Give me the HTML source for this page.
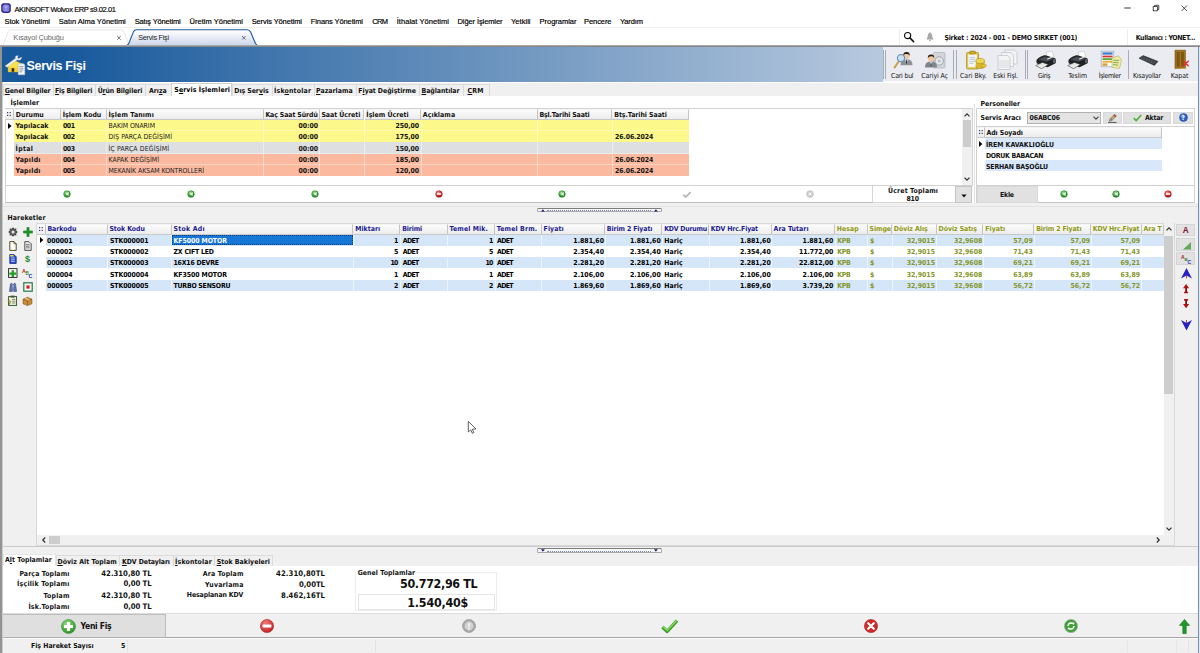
<!DOCTYPE html><html lang="tr"><head><meta charset="utf-8"><title>AKINSOFT Wolvox ERP - Servis Fişi</title><style>

html,body{margin:0;padding:0;}
body{width:1200px;height:653px;position:relative;overflow:hidden;background:#fff;}
.b{position:absolute;box-sizing:border-box;}
.t{position:absolute;white-space:nowrap;font-weight:700;}
.ft{font-family:"DejaVu Sans Condensed","DejaVu Sans","Liberation Sans",sans-serif;}
.fs{font-family:"Liberation Sans","DejaVu Sans",sans-serif;}
svg{position:absolute;overflow:visible;}
u{text-decoration:underline;text-decoration-thickness:0.6px;text-underline-offset:0.8px;}

</style></head><body>
<svg style="left:1px;top:3px" width="10" height="10" viewBox="0 0 10 10"><rect x="0.2" y="0.2" width="9.6" height="9.8" rx="2.4" fill="#2b2684"/><rect x="1.5" y="1.5" width="7" height="7.2" rx="2" fill="#7f7dd6"/><circle cx="5" cy="3.8" r="1.6" fill="#a9a8ea"/><circle cx="5" cy="6.6" r="1.3" fill="#9a98e2"/></svg>
<svg style="left:1120px;top:0" width="80" height="16" viewBox="0 0 80 16"><path d="M4.2 8h6.6" stroke="#222" stroke-width="0.9" fill="none"/><rect x="33.2" y="6.6" width="4.2" height="4.2" fill="none" stroke="#222" stroke-width="0.8"/><path d="M34.6 6.6v-1.3h4.2v4.2h-1.4" fill="none" stroke="#222" stroke-width="0.8"/><path d="M61.5 5.5l5.5 5.5M67 5.5l-5.5 5.5" stroke="#222" stroke-width="0.8" fill="none"/></svg>
<div class="b " style="left:0px;top:27.4px;width:1200px;height:0.8px;background:#efefef;"></div>
<svg style="left:0;top:28px" width="300" height="19" viewBox="0 0 300 19">
<defs><linearGradient id="tg" x1="0" y1="0" x2="0" y2="1"><stop offset="0" stop-color="#ffffff"/><stop offset="0.25" stop-color="#f4f6fb"/><stop offset="1" stop-color="#c9d4e9"/></linearGradient></defs>
<path d="M3 18 L8.2 3.5 Q9 1.8 11 1.8 L120.5 1.8 Q123 1.8 124 4 L129.5 18" fill="#fff" stroke="#e0e0e0" stroke-width="0.8"/>
<path d="M125.5 18 Q128 17.5 129 15 L133.5 3.6 Q134.3 1.7 136.5 1.7 L247 1.7 Q249.6 1.7 250.6 4 L255.5 15.5 Q256.6 17.8 259 18" fill="url(#tg)" stroke="#1f5a9c" stroke-width="1.1"/>
<path d="M117.2 8l3.6 3.6M120.8 8l-3.6 3.6" stroke="#333" stroke-width="0.7" fill="none"/>
<path d="M242 8l3.6 3.6M245.6 8l-3.6 3.6" stroke="#333" stroke-width="0.7" fill="none"/>
</svg>
<div class="b " style="left:899px;top:29px;width:1px;height:16px;background:#ececec;"></div>
<div class="b " style="left:1127px;top:29px;width:1px;height:16px;background:#ececec;"></div>
<svg style="left:903px;top:31px" width="12" height="12" viewBox="0 0 12 12"><circle cx="4.6" cy="4.6" r="3.1" fill="none" stroke="#111" stroke-width="1.2"/><path d="M6.9 6.9L10.6 10.6" stroke="#111" stroke-width="1.5" stroke-linecap="round"/></svg>
<svg style="left:925px;top:32px" width="10" height="10" viewBox="0 0 10 10"><path d="M5 0.3 C6.6 0.8 7.2 2.8 7.4 5 L8.6 7.6 H1.4 L2.6 5 C2.8 2.8 3.4 0.8 5 0.3Z" fill="#a9a9a9"/><rect x="4.2" y="7.8" width="1.6" height="1.2" fill="#a9a9a9"/></svg>
<div class="b " style="left:0px;top:45px;width:1200px;height:1.2px;background:#a8a8a8;"></div>
<div class="b " style="left:0px;top:46px;width:1200px;height:1.3px;background:#868686;"></div>
<div class="b " style="left:0px;top:45.5px;width:1.5px;height:607.5px;background:#939393;"></div>
<div class="b " style="left:1.5px;top:47.3px;width:1px;height:605.7px;background:#d9d9d9;"></div>
<div class="b " style="left:1197.6px;top:47px;width:1px;height:606px;background:#6f8fb3;"></div>
<div class="b " style="left:1198.6px;top:47px;width:1.4px;height:606px;background:#e8e8e8;"></div>
<div class="b " style="left:1.6px;top:47.3px;width:881px;height:34.5px;background:linear-gradient(to right,#18599c 0,#18599c 7%,#b7c9de 100%);"></div>
<svg style="left:4px;top:55px" width="22" height="21" viewBox="0 0 22 21">
<path d="M1.2 11.2L10 5.2 18.6 9.2 14.6 10.4V16.8H4.2V10.8z" fill="#f8e24a" stroke="#d9b620" stroke-width="0.5"/>
<path d="M4.4 12.6h10v4.2h-10z" fill="#f2cf3a"/>
<rect x="7.6" y="13.2" width="2.6" height="3.6" fill="#3a2c0e"/>
<path d="M1.4 10.8L3 12.4 13.6 4.6 12.2 2.8z" fill="#eef1f5" stroke="#aab2bc" stroke-width="0.35"/>
<path d="M11.2 2.2C11.6 0.8 13 0.4 14.4 0.8L13.4 2.6 14.6 3.8 17.6 2C17.8 3.6 16.8 5 15.2 5.2 13.6 5.4 12 4.4 11.2 2.2z" fill="#f4f6f9" stroke="#aab2bc" stroke-width="0.35"/>
<path d="M14.2 8.8h5.4l1.2 1.2V19.8H14.2z" fill="#f6f7f9" stroke="#b4bcc6" stroke-width="0.5"/>
<path d="M15.4 11.4h4M15.4 13.2h4M15.4 15h4M15.4 16.8h2.6" stroke="#6f7883" stroke-width="0.7"/>
</svg>
<div class="b " style="left:882.6px;top:47.3px;width:315px;height:33.6px;background:#eaecf1;"></div>
<div class="b " style="left:882.6px;top:80.9px;width:315px;height:1.1px;background:#f8f8f8;"></div>
<div class="b " style="left:883.2px;top:50px;width:1px;height:29px;background:#a9adb5;"></div>
<div class="b " style="left:885.4px;top:50px;width:1px;height:29px;background:#a9adb5;"></div>
<div class="b " style="left:953.2px;top:50px;width:1px;height:29px;background:#a9adb5;"></div>
<div class="b " style="left:955.6px;top:50px;width:1px;height:29px;background:#a9adb5;"></div>
<div class="b " style="left:1024.6px;top:50px;width:1px;height:29px;background:#a9adb5;"></div>
<div class="b " style="left:1027.0px;top:50px;width:1px;height:29px;background:#a9adb5;"></div>
<div class="b " style="left:1128px;top:50px;width:1px;height:29px;background:#a9adb5;"></div>
<svg style="left:893px;top:50px" width="22" height="20" viewBox="0 0 22 20"><g transform="translate(7.5,1.2) scale(1.0)"><path d="M0 14 C0 9.5 2.5 8 6 8 C9.5 8 12 9.5 12 14Z" fill="#8d9299"/><path d="M4.6 8.2L6 12 7.4 8.2Z" fill="#fff"/><path d="M5.6 8.6h0.8L6.5 12 6 12.6 5.5 12Z" fill="#2b2b2b"/><circle cx="6" cy="4.6" r="3.1" fill="#f1c7a0"/><path d="M2.8 4.4C2.6 1.6 4.4 0.6 6.2 0.8 8.4 0.8 9.6 2.2 9.2 4.6 8.6 3.2 7.4 2.6 5.6 2.8 4.2 2.8 3.4 3.4 2.8 4.4Z" fill="#2a1a10"/></g><path d="M6.2 10.8L1.6 17.4" stroke="#c8a050" stroke-width="2" stroke-linecap="round"/><circle cx="8" cy="8.2" r="3.7" fill="#bfe0f7" fill-opacity="0.85" stroke="#5e86b0" stroke-width="1"/></svg>
<svg style="left:924px;top:51.4px" width="23" height="20" viewBox="0 0 23 20"><rect x="9.5" y="1.5" width="11.5" height="15.5" rx="1" fill="#d4d6da" stroke="#a3a7ad" stroke-width="0.6"/><circle cx="15.2" cy="10" r="4.2" fill="#e6e8ec" stroke="#8f949b" stroke-width="0.8"/><circle cx="15.2" cy="10" r="1.6" fill="#b9bdc4"/><g transform="translate(1,2.6) scale(1.0)"><path d="M0 14 C0 9.5 2.5 8 6 8 C9.5 8 12 9.5 12 14Z" fill="#7e858d"/><path d="M4.6 8.2L6 12 7.4 8.2Z" fill="#fff"/><path d="M5.6 8.6h0.8L6.5 12 6 12.6 5.5 12Z" fill="#2b2b2b"/><circle cx="6" cy="4.6" r="3.1" fill="#f1c7a0"/><path d="M2.8 4.4C2.6 1.6 4.4 0.6 6.2 0.8 8.4 0.8 9.6 2.2 9.2 4.6 8.6 3.2 7.4 2.6 5.6 2.8 4.2 2.8 3.4 3.4 2.8 4.4Z" fill="#2a1a10"/></g></svg>
<svg style="left:964.6px;top:50px" width="22" height="21" viewBox="0 0 22 21"><rect x="1.5" y="2.5" width="12" height="16.5" rx="1.2" fill="#e3c64a" stroke="#a88a1c" stroke-width="0.7"/><rect x="3.2" y="4.6" width="8.6" height="12.6" fill="#f4f7fa"/><rect x="4.6" y="1" width="5.8" height="3" rx="0.8" fill="#c9a82c" stroke="#94781a" stroke-width="0.5"/><path d="M4.4 7.4h6M4.4 9.4h6M4.4 11.4h6M4.4 13.4h4" stroke="#9fb4c8" stroke-width="0.7"/><ellipse cx="15.2" cy="16" rx="4.4" ry="2.6" fill="#d9b62a" stroke="#9c7f12" stroke-width="0.5"/><rect x="10.8" y="11" width="8.8" height="5" fill="#d9b62a"/><ellipse cx="15.2" cy="11" rx="4.4" ry="2.6" fill="#f0d550" stroke="#9c7f12" stroke-width="0.5"/><ellipse cx="19" cy="15.6" rx="2.4" ry="1.6" fill="#e6c73a" stroke="#9c7f12" stroke-width="0.4"/></svg>
<svg style="left:996px;top:49px" width="23" height="22" viewBox="0 0 23 22"><g fill="#f2f3f5" stroke="#b5b8be" stroke-width="0.6"><path d="M9 1h9.5l2.5 2.5V15H9z"/><path d="M5.5 3.5H15l2.5 2.5v11.5H5.5z"/><path d="M2 6.5h9.5L14 9v11.5H2z"/></g><path d="M4 11v8M6 11v8M8 11v8M10 11v8M12 11v8" stroke="#c9ccd1" stroke-width="0.6"/></svg>
<svg style="left:1035px;top:50.4px" width="22" height="21" viewBox="0 0 22 21"><path d="M11.2 2.2L17.2 0.8 19 7.2 12.6 8.8z" fill="#fbfbfb" stroke="#b4b4b4" stroke-width="0.5"/><path d="M1.8 9.6C3 7.6 8 5 10.4 5.2L20 8.2C21.2 8.8 21.4 12.4 20.2 13.6L12.6 17.2 10.4 16.6 2 13.6C1.2 12.6 1.2 10.6 1.8 9.6z" fill="#1f2125"/><path d="M3.2 9.6L10.2 6.4 18.4 8.8 11.6 11.8z" fill="#4b4e55"/><path d="M12.2 9.2L18.2 6.6" stroke="#e9e9e9" stroke-width="1.1"/><ellipse cx="19.4" cy="11" rx="1.5" ry="2.6" fill="#5d6169"/><path d="M0.8 15.6L7.4 12.4 13.4 14.6 6.6 18.6z" fill="#f6f6f6" stroke="#3a3a3a" stroke-width="0.6"/><path d="M3.4 15.6L8 13.6M5.4 16.6L10 14.4" stroke="#b9b9b9" stroke-width="0.5"/></svg>
<svg style="left:1067px;top:50.4px" width="22" height="21" viewBox="0 0 22 21"><path d="M11.2 2.2L17.2 0.8 19 7.2 12.6 8.8z" fill="#fbfbfb" stroke="#b4b4b4" stroke-width="0.5"/><path d="M1.8 9.6C3 7.6 8 5 10.4 5.2L20 8.2C21.2 8.8 21.4 12.4 20.2 13.6L12.6 17.2 10.4 16.6 2 13.6C1.2 12.6 1.2 10.6 1.8 9.6z" fill="#1f2125"/><path d="M3.2 9.6L10.2 6.4 18.4 8.8 11.6 11.8z" fill="#4b4e55"/><path d="M12.2 9.2L18.2 6.6" stroke="#e9e9e9" stroke-width="1.1"/><ellipse cx="19.4" cy="11" rx="1.5" ry="2.6" fill="#5d6169"/><path d="M0.8 15.6L7.4 12.4 13.4 14.6 6.6 18.6z" fill="#f6f6f6" stroke="#3a3a3a" stroke-width="0.6"/><path d="M3.4 15.6L8 13.6M5.4 16.6L10 14.4" stroke="#b9b9b9" stroke-width="0.5"/></svg>
<svg style="left:1100px;top:50.4px" width="23" height="22" viewBox="0 0 23 22"><rect x="1.2" y="1.2" width="12.6" height="15.6" fill="#fdfdfd" stroke="#8fa6c4" stroke-width="0.7"/><rect x="2.4" y="2.4" width="10.2" height="2.2" fill="#3d78c8"/><rect x="2.4" y="5.6" width="10.2" height="1.8" fill="#d23a3a"/><rect x="2.4" y="8.2" width="10.2" height="1.8" fill="#58a846"/><rect x="2.4" y="10.8" width="10.2" height="1.8" fill="#e8b030"/><rect x="2.4" y="13.4" width="5" height="2.4" fill="#e59a2e"/><path d="M12 8l6.5-2.2 3 4-2 8.6-7.5-1z" fill="#f2e9a6" stroke="#a7b65a" stroke-width="0.6"/><path d="M13.4 10.2l5.6.2M13.2 12.4l5.4.4M13 14.6l5 .6" stroke="#6aa84a" stroke-width="0.9"/></svg>
<svg style="left:1138px;top:55px" width="21" height="12" viewBox="0 0 21 12"><path d="M1 3.2L5.2 0.6 20 6.4 16.4 10.4z" fill="#3a3d42" stroke="#1f2124" stroke-width="0.5"/><path d="M3 3.3l13.2 5.4M4.6 2.2l13.4 5.4" stroke="#8b8f96" stroke-width="0.6" stroke-dasharray="1 0.8"/></svg>
<svg style="left:1173px;top:49px" width="17" height="21" viewBox="0 0 17 21"><path d="M2 1.2h10.4v17.6L2 19.6z" fill="#a5761c" stroke="#6e4c0e" stroke-width="0.6"/><path d="M3.6 2.8h3.2v15H3.6zM8 2.8h3v14.6H8z" fill="#7d5812"/><path d="M2 19.6l10.4-.8 1.4 1H3z" fill="#c99a3a"/><path d="M10.6 12.2l4.6 4.6M15.2 12.2l-4.6 4.6" stroke="#e03030" stroke-width="1.6" stroke-linecap="round"/></svg>
<div class="b " style="left:1.6px;top:82px;width:1196px;height:1px;background:#fff;"></div>
<div class="b " style="left:1.6px;top:83px;width:1196px;height:13.3px;background:#f0f0f0;"></div>
<div class="b " style="left:2.5px;top:83.6px;width:487px;height:12.8px;background:#f0f0f0;border:0.8px solid #dcdcdc;border-bottom:none;"></div>
<div class="b " style="left:53px;top:84px;width:0.8px;height:12px;background:#dadada;"></div>
<div class="b " style="left:95px;top:84px;width:0.8px;height:12px;background:#dadada;"></div>
<div class="b " style="left:145px;top:84px;width:0.8px;height:12px;background:#dadada;"></div>
<div class="b " style="left:232px;top:84px;width:0.8px;height:12px;background:#dadada;"></div>
<div class="b " style="left:271.5px;top:84px;width:0.8px;height:12px;background:#dadada;"></div>
<div class="b " style="left:313.5px;top:84px;width:0.8px;height:12px;background:#dadada;"></div>
<div class="b " style="left:355.5px;top:84px;width:0.8px;height:12px;background:#dadada;"></div>
<div class="b " style="left:418.5px;top:84px;width:0.8px;height:12px;background:#dadada;"></div>
<div class="b " style="left:463px;top:84px;width:0.8px;height:12px;background:#dadada;"></div>
<div class="b " style="left:170.5px;top:82.6px;width:61.5px;height:14px;background:#fff;border:0.8px solid #d0d0d0;border-bottom:none;"></div>
<div class="b " style="left:1.6px;top:96.3px;width:1196px;height:107px;background:#fff;"></div>
<div class="b " style="left:4.6px;top:107.8px;width:968.4px;height:78px;background:#fff;border:0.8px solid #d2d2d2;"></div>
<div class="b " style="left:5.4px;top:108.8px;width:8.6px;height:10.900000000000006px;background:linear-gradient(#fbfbfb,#ececec);border-right:0.8px solid #c4c4c4;border-bottom:0.8px solid #c9c9c9;border-top:0.8px solid #f4f4f4;"></div>
<div class="b " style="left:14px;top:108.8px;width:47px;height:10.900000000000006px;background:linear-gradient(#fbfbfb,#ececec);border-right:0.8px solid #c4c4c4;border-bottom:0.8px solid #c9c9c9;border-top:0.8px solid #f4f4f4;"></div>
<div class="b " style="left:61px;top:108.8px;width:45.599999999999994px;height:10.900000000000006px;background:linear-gradient(#fbfbfb,#ececec);border-right:0.8px solid #c4c4c4;border-bottom:0.8px solid #c9c9c9;border-top:0.8px solid #f4f4f4;"></div>
<div class="b " style="left:106.6px;top:108.8px;width:157.00000000000003px;height:10.900000000000006px;background:linear-gradient(#fbfbfb,#ececec);border-right:0.8px solid #c4c4c4;border-bottom:0.8px solid #c9c9c9;border-top:0.8px solid #f4f4f4;"></div>
<div class="b " style="left:263.6px;top:108.8px;width:56.0px;height:10.900000000000006px;background:linear-gradient(#fbfbfb,#ececec);border-right:0.8px solid #c4c4c4;border-bottom:0.8px solid #c9c9c9;border-top:0.8px solid #f4f4f4;"></div>
<div class="b " style="left:319.6px;top:108.8px;width:44.89999999999998px;height:10.900000000000006px;background:linear-gradient(#fbfbfb,#ececec);border-right:0.8px solid #c4c4c4;border-bottom:0.8px solid #c9c9c9;border-top:0.8px solid #f4f4f4;"></div>
<div class="b " style="left:364.5px;top:108.8px;width:56.5px;height:10.900000000000006px;background:linear-gradient(#fbfbfb,#ececec);border-right:0.8px solid #c4c4c4;border-bottom:0.8px solid #c9c9c9;border-top:0.8px solid #f4f4f4;"></div>
<div class="b " style="left:421px;top:108.8px;width:116.60000000000002px;height:10.900000000000006px;background:linear-gradient(#fbfbfb,#ececec);border-right:0.8px solid #c4c4c4;border-bottom:0.8px solid #c9c9c9;border-top:0.8px solid #f4f4f4;"></div>
<div class="b " style="left:537.6px;top:108.8px;width:74.79999999999995px;height:10.900000000000006px;background:linear-gradient(#fbfbfb,#ececec);border-right:0.8px solid #c4c4c4;border-bottom:0.8px solid #c9c9c9;border-top:0.8px solid #f4f4f4;"></div>
<div class="b " style="left:612.4px;top:108.8px;width:76.60000000000002px;height:10.900000000000006px;background:linear-gradient(#fbfbfb,#ececec);border-right:0.8px solid #c4c4c4;border-bottom:0.8px solid #c9c9c9;border-top:0.8px solid #f4f4f4;"></div>
<svg style="left:7.4px;top:112.2px" width="5" height="5" viewBox="0 0 5 5"><rect x="0" y="0" width="1.2" height="1.2" fill="#3a3a6a"/><rect x="0" y="2.8" width="1.2" height="1.2" fill="#3a3a6a"/><rect x="2.6" y="0" width="1.2" height="1.2" fill="#3a3a6a"/><rect x="2.6" y="2.8" width="1.2" height="1.2" fill="#3a3a6a"/></svg>
<div class="b " style="left:14px;top:119.7px;width:675px;height:11.3px;background:#fcf88a;"></div>
<div class="b " style="left:14px;top:130.3px;width:675px;height:0.7px;background:rgba(255,255,255,0.35);"></div>
<div class="b " style="left:14px;top:131.0px;width:675px;height:11.3px;background:#fcf88a;"></div>
<div class="b " style="left:14px;top:141.60000000000002px;width:675px;height:0.7px;background:rgba(255,255,255,0.35);"></div>
<div class="b " style="left:14px;top:142.3px;width:675px;height:11.3px;background:#dddfe0;"></div>
<div class="b " style="left:14px;top:152.90000000000003px;width:675px;height:0.7px;background:rgba(255,255,255,0.35);"></div>
<div class="b " style="left:14px;top:153.60000000000002px;width:675px;height:11.3px;background:#fbba9f;"></div>
<div class="b " style="left:14px;top:164.20000000000005px;width:675px;height:0.7px;background:rgba(255,255,255,0.35);"></div>
<div class="b " style="left:14px;top:164.9px;width:675px;height:11.3px;background:#fbba9f;"></div>
<div class="b " style="left:14px;top:175.50000000000003px;width:675px;height:0.7px;background:rgba(255,255,255,0.35);"></div>
<div class="b " style="left:60.6px;top:119.7px;width:0.8px;height:56.5px;background:rgba(255,255,255,0.45);"></div>
<div class="b " style="left:106.19999999999999px;top:119.7px;width:0.8px;height:56.5px;background:rgba(255,255,255,0.45);"></div>
<div class="b " style="left:263.20000000000005px;top:119.7px;width:0.8px;height:56.5px;background:rgba(255,255,255,0.45);"></div>
<div class="b " style="left:319.20000000000005px;top:119.7px;width:0.8px;height:56.5px;background:rgba(255,255,255,0.45);"></div>
<div class="b " style="left:364.1px;top:119.7px;width:0.8px;height:56.5px;background:rgba(255,255,255,0.45);"></div>
<div class="b " style="left:420.6px;top:119.7px;width:0.8px;height:56.5px;background:rgba(255,255,255,0.45);"></div>
<div class="b " style="left:537.2px;top:119.7px;width:0.8px;height:56.5px;background:rgba(255,255,255,0.45);"></div>
<div class="b " style="left:612.0px;top:119.7px;width:0.8px;height:56.5px;background:rgba(255,255,255,0.45);"></div>
<svg style="left:8.4px;top:122.6px" width="4" height="6" viewBox="0 0 4 6"><path d="M0 0L3.6 3 0 6z" fill="#000"/></svg>
<div class="b " style="left:962.4px;top:108.6px;width:9.6px;height:76.4px;background:#f0f0f0;"></div>
<div class="b " style="left:963px;top:120px;width:8.4px;height:26.6px;background:#cdcdcd;"></div>
<svg style="left:964px;top:112.6px" width="6" height="4" viewBox="0 0 6 4"><path d="M0.5 3.4L3 0.8 5.5 3.4" fill="none" stroke="#333" stroke-width="1.25"/></svg>
<svg style="left:964px;top:177.2px" width="6" height="4" viewBox="0 0 6 4"><path d="M0.5 0.6L3 3.2 5.5 0.6" fill="none" stroke="#333" stroke-width="1.25"/></svg>
<div class="b " style="left:4.6px;top:186px;width:868px;height:17px;background:#fff;border:0.8px solid #d6d6d6;border-top:none;border-bottom:1px solid #bdbdbd;"></div>
<svg width="0" height="0" style="left:0;top:0"><defs><radialGradient id="ng" cx="0.38" cy="0.3" r="0.75"><stop offset="0" stop-color="#9be08a"/><stop offset="0.55" stop-color="#3aa836"/><stop offset="1" stop-color="#1f7d1f"/></radialGradient><radialGradient id="nr" cx="0.38" cy="0.3" r="0.75"><stop offset="0" stop-color="#f79a9a"/><stop offset="0.55" stop-color="#d62a2a"/><stop offset="1" stop-color="#a01212"/></radialGradient></defs></svg>
<svg style="left:62.400000000000006px;top:189px" width="10" height="10" viewBox="0 0 10 10"><circle cx="5" cy="5" r="3.35" fill="url(#ng)" stroke="#2a7d28" stroke-width="0.5"/><path d="M6.6 3.1L3.5 5 6.6 6.9z" fill="#fff"/></svg>
<svg style="left:186.2px;top:189px" width="10" height="10" viewBox="0 0 10 10"><circle cx="5" cy="5" r="3.35" fill="url(#ng)" stroke="#2a7d28" stroke-width="0.5"/><path d="M6.6 3.1L3.5 5 6.6 6.9z" fill="#fff"/></svg>
<svg style="left:309.8px;top:189px" width="10" height="10" viewBox="0 0 10 10"><circle cx="5" cy="5" r="3.35" fill="url(#ng)" stroke="#2a7d28" stroke-width="0.5"/><path d="M6.6 3.1L3.5 5 6.6 6.9z" fill="#fff"/></svg>
<svg style="left:433.6px;top:189px" width="10" height="10" viewBox="0 0 10 10"><circle cx="5" cy="5" r="3.35" fill="url(#nr)" stroke="#9c1616" stroke-width="0.5"/><rect x="2.8" y="4.2" width="4.4" height="1.6" fill="#fff"/></svg>
<svg style="left:557.4px;top:189px" width="10" height="10" viewBox="0 0 10 10"><circle cx="5" cy="5" r="3.35" fill="url(#ng)" stroke="#2a7d28" stroke-width="0.5"/><path d="M6.6 3.1L3.5 5 6.6 6.9z" fill="#fff"/></svg>
<svg style="left:805px;top:189px" width="10" height="10" viewBox="0 0 10 10"><circle cx="5" cy="5" r="3.35" fill="#cfcfcf" stroke="#ababab" stroke-width="0.5"/><path d="M3.6 3.6l2.8 2.8M6.4 3.6L3.6 6.4" stroke="#fff" stroke-width="0.9"/></svg>
<svg style="left:681.5px;top:190.6px" width="10" height="7" viewBox="0 0 10 7"><path d="M1.2 3.8L3.8 6 8.6 1.2" fill="none" stroke="#b9b9b9" stroke-width="1.8"/></svg>
<div class="b " style="left:954.6px;top:186.4px;width:17.6px;height:16.2px;background:#e1e1e1;border:0.8px solid #c6c6c6;"></div>
<svg style="left:960.6px;top:193.6px" width="6" height="4" viewBox="0 0 6 4"><path d="M0.4 0.4h5.2L3 3.4z" fill="#111"/></svg>
<div class="b " style="left:872.6px;top:186px;width:82px;height:17px;border-bottom:1px solid #d8d8d8;"></div>
<div class="b " style="left:975.8px;top:108px;width:219px;height:95px;background:#fff;border:0.8px solid #d2d2d2;"></div>
<div class="b " style="left:974.2px;top:104px;width:0.8px;height:99px;background:#e2e2e2;"></div>
<div class="b " style="left:1027px;top:111.6px;width:74.2px;height:12.2px;background:#e4e4e4;border:0.8px solid #b2b2b2;"></div>
<svg style="left:1093.4px;top:116px" width="6" height="4" viewBox="0 0 6 4"><path d="M0.5 0.6L3 3.2 5.5 0.6" fill="none" stroke="#444" stroke-width="1.1"/></svg>
<div class="b " style="left:1103px;top:111.6px;width:18.6px;height:12.2px;background:#e1e1e1;border:0.8px solid #d9d9d9;"></div>
<svg style="left:1107px;top:112.6px" width="11" height="10" viewBox="0 0 11 10"><path d="M1 9.4h8.6" stroke="#3a3a3a" stroke-width="0.8"/><path d="M2.2 8.2L3 5.8 7.6 1.2 9.4 3 4.8 7.6z" fill="#c7a25a" stroke="#5b5b5b" stroke-width="0.5"/><path d="M7 1.8L8.8 3.6" stroke="#b33" stroke-width="1.2"/><path d="M3.4 5.4L5.2 7.2" stroke="#3a7fd0" stroke-width="1"/></svg>
<div class="b " style="left:1123px;top:111.6px;width:48.2px;height:12.2px;background:#e1e1e1;border:0.8px solid #d9d9d9;"></div>
<svg style="left:1132.6px;top:113.8px" width="9" height="8" viewBox="0 0 9 8"><path d="M0.8 4.2L3.2 6.6 8.2 1" fill="none" stroke="#4db03a" stroke-width="1.7"/></svg>
<div class="b " style="left:1172.8px;top:111.6px;width:20.4px;height:12.2px;background:#e1e1e1;border:0.8px solid #d9d9d9;"></div>
<svg style="left:1178.6px;top:113.2px" width="9" height="9" viewBox="0 0 9 9"><circle cx="4.5" cy="4.5" r="4" fill="#2e63c4" stroke="#1b3f8a" stroke-width="0.5"/><circle cx="3.6" cy="3.2" r="2" fill="#7fa6ea" fill-opacity="0.6"/></svg>
<div class="b " style="left:976.6px;top:126.2px;width:217.6px;height:59.4px;background:#fff;border-top:0.8px solid #d0d0d0;border-bottom:0.8px solid #d0d0d0;"></div>
<div class="b " style="left:977px;top:127px;width:7.600000000000023px;height:10.599999999999994px;background:linear-gradient(#fbfbfb,#ececec);border-right:0.8px solid #c4c4c4;border-bottom:0.8px solid #c9c9c9;border-top:0.8px solid #f4f4f4;"></div>
<div class="b " style="left:984.6px;top:127px;width:176.9999999999999px;height:10.599999999999994px;background:linear-gradient(#fbfbfb,#ececec);border-right:0.8px solid #c4c4c4;border-bottom:0.8px solid #c9c9c9;border-top:0.8px solid #f4f4f4;"></div>
<svg style="left:978.6px;top:130.4px" width="5" height="5" viewBox="0 0 5 5"><rect x="0" y="0" width="1.2" height="1.2" fill="#3a3a6a"/><rect x="0" y="2.8" width="1.2" height="1.2" fill="#3a3a6a"/><rect x="2.6" y="0" width="1.2" height="1.2" fill="#3a3a6a"/><rect x="2.6" y="2.8" width="1.2" height="1.2" fill="#3a3a6a"/></svg>
<div class="b " style="left:984.6px;top:137.6px;width:177px;height:11.3px;background:#d8e7f9;"></div>
<div class="b " style="left:984.6px;top:148.9px;width:177px;height:11.3px;background:#fff;"></div>
<div class="b " style="left:984.6px;top:160.2px;width:177px;height:11.3px;background:#d8e7f9;"></div>
<svg style="left:979px;top:141px" width="4" height="6" viewBox="0 0 4 6"><path d="M0 0L3.4 3 0 6z" fill="#000"/></svg>
<div class="b " style="left:977px;top:186.2px;width:60.6px;height:16.4px;background:#e1e1e1;border:0.8px solid #d9d9d9;"></div>
<div class="b " style="left:1037.6px;top:186.2px;width:156.6px;height:16.6px;border-bottom:1px solid #c4c4c4;"></div>
<svg style="left:1059.3px;top:189px" width="10" height="10" viewBox="0 0 10 10"><circle cx="5" cy="5" r="3.35" fill="url(#ng)" stroke="#2a7d28" stroke-width="0.5"/><path d="M6.6 3.1L3.5 5 6.6 6.9z" fill="#fff"/></svg>
<svg style="left:1111px;top:189px" width="10" height="10" viewBox="0 0 10 10"><circle cx="5" cy="5" r="3.35" fill="url(#ng)" stroke="#2a7d28" stroke-width="0.5"/><path d="M6.6 3.1L3.5 5 6.6 6.9z" fill="#fff"/></svg>
<svg style="left:1162.7px;top:189px" width="10" height="10" viewBox="0 0 10 10"><circle cx="5" cy="5" r="3.35" fill="url(#nr)" stroke="#9c1616" stroke-width="0.5"/><rect x="2.8" y="4.2" width="4.4" height="1.6" fill="#fff"/></svg>
<div class="b " style="left:1.6px;top:203.2px;width:1196px;height:350.6px;background:#f0f0f0;"></div>
<div class="b " style="left:1.6px;top:206px;width:1196px;height:0.8px;background:#e2e2e2;"></div>
<div class="b " style="left:536.8px;top:207.6px;width:124.8px;height:4.8px;background:#f7f7f7;border:0.8px solid #a9a9a9;border-top-color:#7e7e7e;border-radius:1.4px;"></div>
<div class="b " style="left:547px;top:210.2px;width:104px;height:0px;border-top:0.9px dotted #7b86b0;"></div>
<svg style="left:540.8px;top:208.79999999999998px" width="4" height="3" viewBox="0 0 4 3"><path d="M0 2.6h3.8L1.9 0.2z" fill="#15156e"/></svg>
<svg style="left:654.2px;top:208.79999999999998px" width="4" height="3" viewBox="0 0 4 3"><path d="M0 2.6h3.8L1.9 0.2z" fill="#15156e"/></svg>
<div class="b " style="left:36.4px;top:222.6px;width:1138.4px;height:323.4px;background:#fff;border:0.8px solid #d9d9d9;"></div>
<div class="b " style="left:37.2px;top:223.6px;width:8.399999999999999px;height:11.0px;background:linear-gradient(#fbfbfb,#ececec);border-right:0.8px solid #c4c4c4;border-bottom:0.8px solid #c9c9c9;border-top:0.8px solid #f4f4f4;"></div>
<div class="b " style="left:45.6px;top:223.6px;width:61.99999999999999px;height:11.0px;background:linear-gradient(#fbfbfb,#ececec);border-right:0.8px solid #c4c4c4;border-bottom:0.8px solid #c9c9c9;border-top:0.8px solid #f4f4f4;"></div>
<div class="b " style="left:107.6px;top:223.6px;width:64.20000000000002px;height:11.0px;background:linear-gradient(#fbfbfb,#ececec);border-right:0.8px solid #c4c4c4;border-bottom:0.8px solid #c9c9c9;border-top:0.8px solid #f4f4f4;"></div>
<div class="b " style="left:171.8px;top:223.6px;width:181.59999999999997px;height:11.0px;background:linear-gradient(#fbfbfb,#ececec);border-right:0.8px solid #c4c4c4;border-bottom:0.8px solid #c9c9c9;border-top:0.8px solid #f4f4f4;"></div>
<div class="b " style="left:353.4px;top:223.6px;width:47.0px;height:11.0px;background:linear-gradient(#fbfbfb,#ececec);border-right:0.8px solid #c4c4c4;border-bottom:0.8px solid #c9c9c9;border-top:0.8px solid #f4f4f4;"></div>
<div class="b " style="left:400.4px;top:223.6px;width:47.400000000000034px;height:11.0px;background:linear-gradient(#fbfbfb,#ececec);border-right:0.8px solid #c4c4c4;border-bottom:0.8px solid #c9c9c9;border-top:0.8px solid #f4f4f4;"></div>
<div class="b " style="left:447.8px;top:223.6px;width:47.19999999999999px;height:11.0px;background:linear-gradient(#fbfbfb,#ececec);border-right:0.8px solid #c4c4c4;border-bottom:0.8px solid #c9c9c9;border-top:0.8px solid #f4f4f4;"></div>
<div class="b " style="left:495px;top:223.6px;width:46.799999999999955px;height:11.0px;background:linear-gradient(#fbfbfb,#ececec);border-right:0.8px solid #c4c4c4;border-bottom:0.8px solid #c9c9c9;border-top:0.8px solid #f4f4f4;"></div>
<div class="b " style="left:541.8px;top:223.6px;width:63.200000000000045px;height:11.0px;background:linear-gradient(#fbfbfb,#ececec);border-right:0.8px solid #c4c4c4;border-bottom:0.8px solid #c9c9c9;border-top:0.8px solid #f4f4f4;"></div>
<div class="b " style="left:605px;top:223.6px;width:57.39999999999998px;height:11.0px;background:linear-gradient(#fbfbfb,#ececec);border-right:0.8px solid #c4c4c4;border-bottom:0.8px solid #c9c9c9;border-top:0.8px solid #f4f4f4;"></div>
<div class="b " style="left:662.4px;top:223.6px;width:46.60000000000002px;height:11.0px;background:linear-gradient(#fbfbfb,#ececec);border-right:0.8px solid #c4c4c4;border-bottom:0.8px solid #c9c9c9;border-top:0.8px solid #f4f4f4;"></div>
<div class="b " style="left:709px;top:223.6px;width:62.799999999999955px;height:11.0px;background:linear-gradient(#fbfbfb,#ececec);border-right:0.8px solid #c4c4c4;border-bottom:0.8px solid #c9c9c9;border-top:0.8px solid #f4f4f4;"></div>
<div class="b " style="left:771.8px;top:223.6px;width:63.200000000000045px;height:11.0px;background:linear-gradient(#fbfbfb,#ececec);border-right:0.8px solid #c4c4c4;border-bottom:0.8px solid #c9c9c9;border-top:0.8px solid #f4f4f4;"></div>
<div class="b " style="left:835px;top:223.6px;width:32.799999999999955px;height:11.0px;background:linear-gradient(#fbfbfb,#ececec);border-right:0.8px solid #c4c4c4;border-bottom:0.8px solid #c9c9c9;border-top:0.8px solid #f4f4f4;"></div>
<div class="b " style="left:867.8px;top:223.6px;width:24.200000000000045px;height:11.0px;background:linear-gradient(#fbfbfb,#ececec);border-right:0.8px solid #c4c4c4;border-bottom:0.8px solid #c9c9c9;border-top:0.8px solid #f4f4f4;"></div>
<div class="b " style="left:892px;top:223.6px;width:44.799999999999955px;height:11.0px;background:linear-gradient(#fbfbfb,#ececec);border-right:0.8px solid #c4c4c4;border-bottom:0.8px solid #c9c9c9;border-top:0.8px solid #f4f4f4;"></div>
<div class="b " style="left:936.8px;top:223.6px;width:46.60000000000002px;height:11.0px;background:linear-gradient(#fbfbfb,#ececec);border-right:0.8px solid #c4c4c4;border-bottom:0.8px solid #c9c9c9;border-top:0.8px solid #f4f4f4;"></div>
<div class="b " style="left:983.4px;top:223.6px;width:51.000000000000114px;height:11.0px;background:linear-gradient(#fbfbfb,#ececec);border-right:0.8px solid #c4c4c4;border-bottom:0.8px solid #c9c9c9;border-top:0.8px solid #f4f4f4;"></div>
<div class="b " style="left:1034.4px;top:223.6px;width:56.59999999999991px;height:11.0px;background:linear-gradient(#fbfbfb,#ececec);border-right:0.8px solid #c4c4c4;border-bottom:0.8px solid #c9c9c9;border-top:0.8px solid #f4f4f4;"></div>
<div class="b " style="left:1091px;top:223.6px;width:50.59999999999991px;height:11.0px;background:linear-gradient(#fbfbfb,#ececec);border-right:0.8px solid #c4c4c4;border-bottom:0.8px solid #c9c9c9;border-top:0.8px solid #f4f4f4;"></div>
<div class="b " style="left:1141.6px;top:223.6px;width:22.40000000000009px;height:11.0px;background:linear-gradient(#fbfbfb,#ececec);border-right:0.8px solid #c4c4c4;border-bottom:0.8px solid #c9c9c9;border-top:0.8px solid #f4f4f4;"></div>
<svg style="left:39.2px;top:226.6px" width="5" height="5" viewBox="0 0 5 5"><rect x="0" y="0" width="1.2" height="1.2" fill="#3a3a6a"/><rect x="0" y="2.8" width="1.2" height="1.2" fill="#3a3a6a"/><rect x="2.6" y="0" width="1.2" height="1.2" fill="#3a3a6a"/><rect x="2.6" y="2.8" width="1.2" height="1.2" fill="#3a3a6a"/></svg>
<div class="b " style="left:45.6px;top:234.6px;width:1118.4px;height:11.3px;background:#d6e6f9;"></div>
<div class="b " style="left:171.8px;top:234.79999999999998px;width:181.6px;height:10.100000000000001px;background:#1676d6;border:0.8px dotted #0d3f7a;"></div>
<div class="b " style="left:45.6px;top:257.2px;width:1118.4px;height:11.3px;background:#d6e6f9;"></div>
<div class="b " style="left:45.6px;top:279.8px;width:1118.4px;height:11.3px;background:#d6e6f9;"></div>
<div class="b " style="left:107.19999999999999px;top:234.6px;width:0.8px;height:56.5px;background:rgba(255,255,255,0.55);"></div>
<div class="b " style="left:171.4px;top:234.6px;width:0.8px;height:56.5px;background:rgba(255,255,255,0.55);"></div>
<div class="b " style="left:353.0px;top:234.6px;width:0.8px;height:56.5px;background:rgba(255,255,255,0.55);"></div>
<div class="b " style="left:400.0px;top:234.6px;width:0.8px;height:56.5px;background:rgba(255,255,255,0.55);"></div>
<div class="b " style="left:447.40000000000003px;top:234.6px;width:0.8px;height:56.5px;background:rgba(255,255,255,0.55);"></div>
<div class="b " style="left:494.6px;top:234.6px;width:0.8px;height:56.5px;background:rgba(255,255,255,0.55);"></div>
<div class="b " style="left:541.4px;top:234.6px;width:0.8px;height:56.5px;background:rgba(255,255,255,0.55);"></div>
<div class="b " style="left:604.6px;top:234.6px;width:0.8px;height:56.5px;background:rgba(255,255,255,0.55);"></div>
<div class="b " style="left:662.0px;top:234.6px;width:0.8px;height:56.5px;background:rgba(255,255,255,0.55);"></div>
<div class="b " style="left:708.6px;top:234.6px;width:0.8px;height:56.5px;background:rgba(255,255,255,0.55);"></div>
<div class="b " style="left:771.4px;top:234.6px;width:0.8px;height:56.5px;background:rgba(255,255,255,0.55);"></div>
<div class="b " style="left:834.6px;top:234.6px;width:0.8px;height:56.5px;background:rgba(255,255,255,0.55);"></div>
<div class="b " style="left:867.4px;top:234.6px;width:0.8px;height:56.5px;background:rgba(255,255,255,0.55);"></div>
<div class="b " style="left:891.6px;top:234.6px;width:0.8px;height:56.5px;background:rgba(255,255,255,0.55);"></div>
<div class="b " style="left:936.4px;top:234.6px;width:0.8px;height:56.5px;background:rgba(255,255,255,0.55);"></div>
<div class="b " style="left:983.0px;top:234.6px;width:0.8px;height:56.5px;background:rgba(255,255,255,0.55);"></div>
<div class="b " style="left:1034.0px;top:234.6px;width:0.8px;height:56.5px;background:rgba(255,255,255,0.55);"></div>
<div class="b " style="left:1090.6px;top:234.6px;width:0.8px;height:56.5px;background:rgba(255,255,255,0.55);"></div>
<div class="b " style="left:1141.1999999999998px;top:234.6px;width:0.8px;height:56.5px;background:rgba(255,255,255,0.55);"></div>
<svg style="left:40px;top:237.4px" width="4" height="6" viewBox="0 0 4 6"><path d="M0 0L3.4 3 0 6z" fill="#000"/></svg>
<div class="b " style="left:1164px;top:223.4px;width:10.2px;height:322px;background:#f0f0f0;"></div>
<div class="b " style="left:1164.4px;top:236px;width:8.6px;height:158.4px;background:#cdcdcd;"></div>
<svg style="left:1165.6px;top:227.4px" width="6" height="4" viewBox="0 0 6 4"><path d="M0.5 3.4L3 0.8 5.5 3.4" fill="none" stroke="#333" stroke-width="1.25"/></svg>
<svg style="left:1165.6px;top:527.2px" width="6" height="4" viewBox="0 0 6 4"><path d="M0.5 0.6L3 3.2 5.5 0.6" fill="none" stroke="#333" stroke-width="1.25"/></svg>
<div class="b " style="left:37.2px;top:534.6px;width:1137px;height:10.7px;background:#f0f0f0;"></div>
<div class="b " style="left:1.6px;top:545.6px;width:1196px;height:0.9px;background:#cbcbcb;"></div>
<div class="b " style="left:49px;top:535.8px;width:10.6px;height:8px;background:#cdcdcd;"></div>
<svg style="left:41.6px;top:536.6px" width="4" height="6" viewBox="0 0 4 6"><path d="M3.2 0.5L0.8 3 3.2 5.5" fill="none" stroke="#333" stroke-width="1.25"/></svg>
<svg style="left:1156px;top:536.6px" width="4" height="6" viewBox="0 0 4 6"><path d="M0.8 0.5L3.2 3 0.8 5.5" fill="none" stroke="#333" stroke-width="1.25"/></svg>
<div class="b " style="left:1176.4px;top:223.6px;width:18.8px;height:12.6px;background:#e1e1e1;border:0.8px solid #d4d4d4;"></div>
<div class="b " style="left:1176.4px;top:238.4px;width:18.8px;height:12.6px;background:#e1e1e1;border:0.8px solid #d4d4d4;"></div>
<div class="b " style="left:1176.4px;top:252.4px;width:18.8px;height:12.6px;background:#e1e1e1;border:0.8px solid #d4d4d4;"></div>
<svg style="left:1182.6px;top:241.8px" width="8" height="7.4" viewBox="0 0 8 7.4"><path d="M0 7.4H8V0z" fill="#62aa5c"/></svg>
<svg style="left:1180.6px;top:253.6px" width="11" height="10" viewBox="0 0 11 10"><text x="0" y="4.6" font-family="Liberation Sans" font-weight="700" font-size="5" fill="#b02020">A</text><text x="3.6" y="7.4" font-family="Liberation Sans" font-weight="700" font-size="4.4" fill="#2a8a2a">B</text><text x="6.6" y="9.6" font-family="Liberation Sans" font-weight="700" font-size="5" fill="#2a2ab0">C</text></svg>
<svg style="left:1180.6px;top:268.4px" width="11" height="10.4" viewBox="0 0 11 10.4"><path d="M5.5 0L11 10.4 5.5 7.4 0 10.4z" fill="#2522c4"/><path d="M5.5 7.4v3" stroke="#a01818" stroke-width="0.8"/></svg>
<svg style="left:1182.5px;top:284.2px" width="6.2" height="9.3" viewBox="0 0 6.8 10.2"><path d="M3.4 0L6.8 4.6H4.4V8.4H5.6V10.2H1.2V8.4H2.4V4.6H0z" fill="#b01414"/><path d="M3.4 4.6v5" stroke="#4a0a0a" stroke-width="0.6"/></svg>
<svg style="left:1182.5px;top:298.8px" width="6.2" height="9.3" viewBox="0 0 6.8 10.2"><path d="M3.4 10.2L6.8 5.6H4.4V1.8H5.6V0H1.2V1.8H2.4V5.6H0z" fill="#b01414"/><path d="M3.4 0.6v5" stroke="#4a0a0a" stroke-width="0.6"/></svg>
<svg style="left:1180.6px;top:319.6px" width="11" height="10.4" viewBox="0 0 11 10.4"><path d="M5.5 10.4L11 0 5.5 3 0 0z" fill="#2522c4"/><path d="M5.5 3v-3" stroke="#a01818" stroke-width="0.8"/></svg>
<svg style="left:7.5px;top:226.7px" width="10" height="10" viewBox="0 0 10 10"><polygon points="9.80,5.00 8.23,6.34 8.39,8.39 6.34,8.23 5.00,9.80 3.66,8.23 1.61,8.39 1.77,6.34 0.20,5.00 1.77,3.66 1.61,1.61 3.66,1.77 5.00,0.20 6.34,1.77 8.39,1.61 8.23,3.66" fill="#3c3c3c"/><circle cx="5" cy="5" r="3.2" fill="#5a5a5a"/><circle cx="5" cy="5" r="1.5" fill="#e9e9e9"/></svg>
<svg style="left:22.5px;top:226.7px" width="10" height="10" viewBox="0 0 10 10"><path d="M3.9 0.5h2.2v3.4h3.4v2.2H6.1v3.4H3.9V6.1H0.5V3.9h3.4z" fill="#1f9a24" stroke="#0f6a14" stroke-width="0.5"/></svg>
<svg style="left:8.5px;top:240.5px" width="8" height="10" viewBox="0 0 8 10"><path d="M0.8 0.6h4.2l2.2 2.2v6.6H0.8z" fill="#fffef0" stroke="#3a3a1a" stroke-width="0.9"/><path d="M5 0.6v2.2h2.2" fill="none" stroke="#3a3a1a" stroke-width="0.7"/></svg>
<svg style="left:23.5px;top:240.5px" width="8" height="10" viewBox="0 0 8 10"><path d="M0.8 0.6h4.2l2.2 2.2v6.6H0.8z" fill="#e6e6e6" stroke="#444" stroke-width="0.9"/><path d="M2 3.6h3.6M2 5.2h3.6M2 6.8h3.6" stroke="#555" stroke-width="0.7"/></svg>
<svg style="left:8.5px;top:254.3px" width="8" height="10" viewBox="0 0 8 10"><path d="M0.8 0.6h4.2l2.2 2.2v6.6H0.8z" fill="#2a4fd0" stroke="#16267a" stroke-width="0.8"/><path d="M2 4h3.8M2 5.8h3.8M2 7.4h3.8" stroke="#dfe6ff" stroke-width="0.7"/><path d="M1.2 1h3.4v1.6H1.2z" fill="#e8d84a"/></svg>
<span class="t fs" style="left:24.9px;top:253.70000000000002px;font-size:9px;line-height:11px;color:#1f8a2c;font-weight:700;">$</span>
<svg style="left:7.5px;top:268.1px" width="10" height="10" viewBox="0 0 10 10"><rect x="0.6" y="0.6" width="8.4" height="8.8" fill="#f4f4f4" stroke="#222" stroke-width="0.9"/><path d="M3.6 2.2h2.4v2.2h2.2v2.4H6v2.2H3.6V6.8H1.4V4.4h2.2z" fill="#22a022"/></svg>
<svg style="left:22.0px;top:268.1px" width="11" height="10" viewBox="0 0 11 10"><text x="0" y="4.6" font-family="Liberation Sans" font-weight="700" font-size="5.2" fill="#b02020">A</text><text x="3.6" y="7.4" font-family="Liberation Sans" font-weight="700" font-size="4.6" fill="#2a8a2a">B</text><text x="6.6" y="9.6" font-family="Liberation Sans" font-weight="700" font-size="5.2" fill="#2a2ab0">C</text></svg>
<svg style="left:7.5px;top:281.9px" width="10" height="10" viewBox="0 0 10 10"><path d="M1.4 9.4L2.4 2.2C2.6 1 4.2 1 4.4 2.2V9.4z" fill="#5f78b8" stroke="#2a3a6a" stroke-width="0.5"/><path d="M5.6 9.4V2.2C5.8 1 7.4 1 7.6 2.2L8.6 9.4z" fill="#5f78b8" stroke="#2a3a6a" stroke-width="0.5"/><rect x="4.2" y="3" width="1.6" height="2.4" fill="#98a7cf"/></svg>
<svg style="left:22.5px;top:281.9px" width="10" height="10" viewBox="0 0 10 10"><rect x="0.8" y="0.8" width="8.4" height="8.4" fill="#f7f7f7" stroke="#1e7a4a" stroke-width="1.2"/><rect x="3.4" y="3.4" width="3.2" height="3.2" fill="#d02020"/></svg>
<svg style="left:7.0px;top:295.2px" width="11" height="11" viewBox="0 0 11 11"><rect x="1.6" y="1.6" width="8" height="8.8" fill="#f2f0d8" stroke="#2a4a2a" stroke-width="0.9"/><rect x="3.6" y="0.6" width="4" height="2" fill="#3a5a3a"/><path d="M1 5l3 1.4-1.6 3z" fill="#d8c23a" stroke="#2a4a2a" stroke-width="0.4"/><path d="M5 4.4h3.4M5 6.2h3.4M5 8h3.4" stroke="#4a6a4a" stroke-width="0.7"/></svg>
<svg style="left:22.0px;top:295.7px" width="11" height="10" viewBox="0 0 11 10"><path d="M1 3.2L5.5 1.2 10 3.2V7.8L5.5 9.6 1 7.8z" fill="#c98a3a" stroke="#7a4a12" stroke-width="0.5"/><path d="M1 3.2L5.5 5 10 3.2M5.5 5V9.6" fill="none" stroke="#7a4a12" stroke-width="0.5"/><path d="M3 2.2L7.6 4.2" stroke="#f0d8a0" stroke-width="0.9"/></svg>
<div class="b " style="left:536.8px;top:548.2px;width:124.8px;height:4.8px;background:#f7f7f7;border:0.8px solid #a9a9a9;border-top-color:#7e7e7e;border-radius:1.4px;"></div>
<div class="b " style="left:547px;top:550.8000000000001px;width:104px;height:0px;border-top:0.9px dotted #7b86b0;"></div>
<svg style="left:540.8px;top:549.4000000000001px" width="4" height="3" viewBox="0 0 4 3"><path d="M0 0.3h3.8L1.9 2.7z" fill="#15156e"/></svg>
<svg style="left:654.2px;top:549.4000000000001px" width="4" height="3" viewBox="0 0 4 3"><path d="M0 0.3h3.8L1.9 2.7z" fill="#15156e"/></svg>
<div class="b " style="left:1.6px;top:553.8px;width:1196px;height:12.4px;background:#f0f0f0;"></div>
<div class="b " style="left:2.6px;top:553.6px;width:53.2px;height:13px;background:#fff;border:0.8px solid #e6e6e6;border-bottom:none;"></div>
<div class="b " style="left:55.8px;top:554.8px;width:217.4px;height:11.4px;background:#f0f0f0;border:0.8px solid #dcdcdc;border-bottom:none;"></div>
<div class="b " style="left:119.4px;top:555.4px;width:0.8px;height:10.6px;background:#dadada;"></div>
<div class="b " style="left:172.6px;top:555.4px;width:0.8px;height:10.6px;background:#dadada;"></div>
<div class="b " style="left:214px;top:555.4px;width:0.8px;height:10.6px;background:#dadada;"></div>
<div class="b " style="left:1.6px;top:566.4px;width:1196px;height:46.8px;background:#fff;"></div>
<div class="b " style="left:1.6px;top:613px;width:1196px;height:0.8px;background:#dcdcdc;"></div>
<div class="b " style="left:355px;top:572.4px;width:141.6px;height:38.4px;border:0.8px solid #ececec;"></div>
<div class="b " style="left:356.4px;top:568px;width:59.6px;height:8.6px;background:#fff;"></div>
<div class="b " style="left:358.4px;top:594px;width:136.6px;height:15.6px;border:0.8px solid #e4e4e4;"></div>
<div class="b " style="left:1.6px;top:613.8px;width:1196px;height:24px;background:#f0f0f0;"></div>
<div class="b " style="left:2.2px;top:614.2px;width:163.6px;height:23.8px;background:#dfdfdf;border:0.8px solid #bdbdbd;border-bottom-color:#b0b0b0;"></div>
<svg style="left:60.7px;top:618.5px" width="15" height="15" viewBox="0 0 15 15"><defs><radialGradient id="gp" cx="0.4" cy="0.3" r="0.8"><stop offset="0" stop-color="#8fe07a"/><stop offset="1" stop-color="#1f8a1f"/></radialGradient></defs><circle cx="7.5" cy="7.5" r="7" fill="url(#gp)" stroke="#2a7a2a" stroke-width="0.5"/><path d="M6 3h3v3h3v3H9v3H6V9H3V6h3z" fill="#fff"/></svg>
<svg style="left:259.8px;top:619.0px" width="14" height="14" viewBox="0 0 14 14"><defs><radialGradient id="rp" cx="0.4" cy="0.3" r="0.8"><stop offset="0" stop-color="#f07a7a"/><stop offset="1" stop-color="#c01818"/></radialGradient></defs><circle cx="7" cy="7" r="6.6" fill="url(#rp)" stroke="#9a1414" stroke-width="0.5"/><rect x="2.6" y="5.6" width="8.8" height="2.8" rx="0.6" fill="#fff"/></svg>
<svg style="left:461.8px;top:619.0px" width="14" height="14" viewBox="0 0 14 14"><circle cx="7" cy="7" r="6.5" fill="#a9a9a9" stroke="#8e8e8e" stroke-width="0.6"/><circle cx="7" cy="7" r="4.4" fill="#d2d2d2"/><path d="M6 4.2h2.2l-.6 4.4H6.4zM6.2 9.4h1.6v1.4H6.2z" fill="#f4f4f4"/></svg>
<svg style="left:660.7px;top:619.0px" width="17" height="14" viewBox="0 0 17 14"><path d="M1.4 8L6.2 12.4 16 1.6" fill="none" stroke="#3f9a2a" stroke-width="3.4" stroke-linejoin="round"/><path d="M1.8 7.6L6.2 11.4 15.4 1.6" fill="none" stroke="#7fd65a" stroke-width="1.6"/></svg>
<svg style="left:863.6px;top:619.0px" width="14" height="14" viewBox="0 0 14 14"><circle cx="7" cy="7" r="6.6" fill="#d42828" stroke="#9a1414" stroke-width="0.5"/><path d="M4.2 4.2l5.6 5.6M9.8 4.2l-5.6 5.6" stroke="#fff" stroke-width="2.2" stroke-linecap="round"/></svg>
<svg style="left:1064.4px;top:619.0px" width="14" height="14" viewBox="0 0 14 14"><circle cx="7" cy="7" r="6.6" fill="#3f9f3a" stroke="#9ab69a" stroke-width="0.9"/><path d="M4 7a3 3 0 0 1 5-2.2" fill="none" stroke="#fff" stroke-width="1.5"/><path d="M10 7a3 3 0 0 1-5 2.2" fill="none" stroke="#fff" stroke-width="1.5"/><path d="M8 3.4l2.6 0.4-1 2.2z M6 10.6l-2.6-0.4 1-2.2z" fill="#fff"/></svg>
<svg style="left:1178.7px;top:618.5px" width="11" height="15" viewBox="0 0 11 15"><path d="M5.5 0.4L10.6 6.4H7.2V14.6H3.8V6.4H0.4z" fill="#1f9a2a" stroke="#0e6a16" stroke-width="0.6"/></svg>
<div class="b " style="left:165.8px;top:636.8px;width:1032px;height:1.2px;background:#a4a4a4;"></div>
<div class="b " style="left:1.6px;top:638px;width:1196px;height:0.9px;background:#fbfbfb;"></div>
<div class="b " style="left:1.6px;top:638.8px;width:1196px;height:14.2px;background:#f0f0f0;"></div>
<div class="b " style="left:1127px;top:640px;width:0.8px;height:12px;background:#e6e6e6;"></div>
<div class="b " style="left:1175.6px;top:640px;width:0.8px;height:12px;background:#e6e6e6;"></div>
<div class="b " style="left:1187.6px;top:640px;width:0.8px;height:12px;background:#e6e6e6;"></div>
<svg style="left:466px;top:419px" width="12" height="16" viewBox="466 419 12 16"><path d="M468.3 421.4L468.3 431.9L470.7 429.9L472.4 433.3L473.9 432.5L472.3 429.3L475.9 428.8Z" fill="#fff" stroke="#2a2a2a" stroke-width="0.75" stroke-linejoin="round"/></svg>
<div class="b " style="left:1.5px;top:82px;width:0.8px;height:571px;background:#cdcdcd;"></div>
<div class="b " style="left:127.4px;top:640.4px;width:0.8px;height:11.4px;background:#e2e2e2;"></div>
<div class="b " style="left:375.4px;top:640.4px;width:0.8px;height:11.4px;background:#e2e2e2;"></div>
<span id="t0" class="t fs" style="left:14.50px;top:4px;font-size:7.5px;line-height:11px;color:#000;font-weight:400;letter-spacing:-0.394px;-webkit-text-stroke:0.15px #000;">AKINSOFT Wolvox ERP s9.02.01</span>
<span id="t1" class="t fs" style="left:4.50px;top:16px;font-size:7.5px;line-height:11px;color:#000;font-weight:400;letter-spacing:-0.053px;-webkit-text-stroke:0.18px #000;">Stok Yönetimi</span>
<span id="t2" class="t fs" style="left:58.80px;top:16px;font-size:7.5px;line-height:11px;color:#000;font-weight:400;letter-spacing:-0.023px;-webkit-text-stroke:0.18px #000;">Satın Alma Yönetimi</span>
<span id="t3" class="t fs" style="left:134.70px;top:16px;font-size:7.5px;line-height:11px;color:#000;font-weight:400;letter-spacing:-0.164px;-webkit-text-stroke:0.18px #000;">Satış Yönetimi</span>
<span id="t4" class="t fs" style="left:189.50px;top:16px;font-size:7.5px;line-height:11px;color:#000;font-weight:400;letter-spacing:0.020px;-webkit-text-stroke:0.18px #000;">Üretim Yönetimi</span>
<span id="t5" class="t fs" style="left:251.70px;top:16px;font-size:7.5px;line-height:11px;color:#000;font-weight:400;letter-spacing:-0.119px;-webkit-text-stroke:0.18px #000;">Servis Yönetimi</span>
<span id="t6" class="t fs" style="left:310.80px;top:16px;font-size:7.5px;line-height:11px;color:#000;font-weight:400;letter-spacing:-0.103px;-webkit-text-stroke:0.18px #000;">Finans Yönetimi</span>
<span id="t7" class="t fs" style="left:372.20px;top:16px;font-size:7.5px;line-height:11px;color:#000;font-weight:400;letter-spacing:-0.647px;-webkit-text-stroke:0.18px #000;">CRM</span>
<span id="t8" class="t fs" style="left:396.70px;top:16px;font-size:7.5px;line-height:11px;color:#000;font-weight:400;letter-spacing:0.049px;-webkit-text-stroke:0.18px #000;">İthalat Yönetimi</span>
<span id="t9" class="t fs" style="left:457.50px;top:16px;font-size:7.5px;line-height:11px;color:#000;font-weight:400;letter-spacing:-0.097px;-webkit-text-stroke:0.18px #000;">Diğer İşlemler</span>
<span id="t10" class="t fs" style="left:511.00px;top:16px;font-size:7.5px;line-height:11px;color:#000;font-weight:400;letter-spacing:0.029px;-webkit-text-stroke:0.18px #000;">Yetkili</span>
<span id="t11" class="t fs" style="left:539.50px;top:16px;font-size:7.5px;line-height:11px;color:#000;font-weight:400;letter-spacing:-0.010px;-webkit-text-stroke:0.18px #000;">Programlar</span>
<span id="t12" class="t fs" style="left:584.00px;top:16px;font-size:7.5px;line-height:11px;color:#000;font-weight:400;letter-spacing:-0.073px;-webkit-text-stroke:0.18px #000;">Pencere</span>
<span id="t13" class="t fs" style="left:620.00px;top:16px;font-size:7.5px;line-height:11px;color:#000;font-weight:400;letter-spacing:-0.125px;-webkit-text-stroke:0.18px #000;">Yardım</span>
<span id="t14" class="t fs" style="left:13.30px;top:32px;font-size:7.5px;line-height:11px;color:#6a6a6a;font-weight:400;letter-spacing:-0.173px;">Kısayol Çubuğu</span>
<span id="t15" class="t fs" style="left:138.30px;top:33px;font-size:7.2px;line-height:10px;color:#222;font-weight:400;letter-spacing:-0.246px;">Servis Fişi</span>
<span id="t16" class="t ft" style="left:944.40px;top:33px;font-size:6.9px;line-height:10px;color:#111;letter-spacing:-0.186px;">Şirket : 2024 - 001 - DEMO SIRKET (001)</span>
<span id="t17" class="t ft" style="left:1135.70px;top:33px;font-size:6.9px;line-height:10px;color:#111;letter-spacing:-0.329px;">Kullanıcı : YONET...</span>
<span id="t18" class="t fs" style="left:26.50px;top:58px;font-size:12.5px;line-height:17px;color:#fff;letter-spacing:-0.305px;">Servis Fişi</span>
<span id="t19" class="t ft" style="left:891.00px;top:71px;font-size:6.9px;line-height:10px;color:#111;font-weight:400;letter-spacing:-0.196px;">Cari bul</span>
<span id="t20" class="t ft" style="left:921.30px;top:71px;font-size:6.9px;line-height:10px;color:#111;font-weight:400;letter-spacing:-0.075px;">Cariyi Aç</span>
<span id="t21" class="t ft" style="left:960.00px;top:71px;font-size:6.9px;line-height:10px;color:#111;font-weight:400;letter-spacing:0.009px;">Cari Bky.</span>
<span id="t22" class="t ft" style="left:993.30px;top:71px;font-size:6.9px;line-height:10px;color:#111;font-weight:400;letter-spacing:-0.160px;">Eski Fişl.</span>
<span id="t23" class="t ft" style="left:1038.00px;top:71px;font-size:6.9px;line-height:10px;color:#111;font-weight:400;letter-spacing:-0.383px;">Giriş</span>
<span id="t24" class="t ft" style="left:1068.30px;top:71px;font-size:6.9px;line-height:10px;color:#111;font-weight:400;letter-spacing:-0.091px;">Teslim</span>
<span id="t25" class="t ft" style="left:1098.70px;top:71px;font-size:6.9px;line-height:10px;color:#111;font-weight:400;letter-spacing:-0.348px;">İşlemler</span>
<span id="t26" class="t ft" style="left:1133.00px;top:71px;font-size:6.9px;line-height:10px;color:#111;font-weight:400;letter-spacing:-0.231px;">Kısayollar</span>
<span id="t27" class="t ft" style="left:1170.70px;top:71px;font-size:6.9px;line-height:10px;color:#111;font-weight:400;letter-spacing:-0.052px;">Kapat</span>
<span id="t28" class="t ft" style="left:4.70px;top:86px;font-size:6.9px;line-height:10px;color:#111;letter-spacing:-0.087px;"><u>G</u>enel Bilgiler</span>
<span id="t29" class="t ft" style="left:55.00px;top:86px;font-size:6.9px;line-height:10px;color:#111;letter-spacing:-0.164px;"><u>F</u>iş Bilgileri</span>
<span id="t30" class="t ft" style="left:97.70px;top:86px;font-size:6.9px;line-height:10px;color:#111;letter-spacing:-0.119px;">Ü<u>r</u>ün Bilgileri</span>
<span id="t31" class="t ft" style="left:149.00px;top:86px;font-size:6.9px;line-height:10px;color:#111;letter-spacing:-0.020px;">Arı<u>z</u>a</span>
<span id="t32" class="t ft" style="left:234.30px;top:86px;font-size:6.9px;line-height:10px;color:#111;letter-spacing:-0.037px;">Dış Ser<u>v</u>is</span>
<span id="t33" class="t ft" style="left:274.00px;top:86px;font-size:6.9px;line-height:10px;color:#111;letter-spacing:0.198px;">İsk<u>o</u>ntolar</span>
<span id="t34" class="t ft" style="left:316.00px;top:86px;font-size:6.9px;line-height:10px;color:#111;letter-spacing:0.045px;"><u>P</u>azarlama</span>
<span id="t35" class="t ft" style="left:358.30px;top:86px;font-size:6.9px;line-height:10px;color:#111;letter-spacing:-0.029px;">F<u>i</u>yat Değiştirme</span>
<span id="t36" class="t ft" style="left:421.50px;top:86px;font-size:6.9px;line-height:10px;color:#111;letter-spacing:-0.053px;"><u>B</u>ağlantılar</span>
<span id="t37" class="t ft" style="left:467.50px;top:86px;font-size:6.9px;line-height:10px;color:#111;letter-spacing:0.242px;"><u>C</u>RM</span>
<span id="t38" class="t ft" style="left:174.30px;top:85px;font-size:6.9px;line-height:10px;color:#000;letter-spacing:0.109px;">S<u>e</u>rvis İşlemleri</span>
<span id="t39" class="t ft" style="left:10.50px;top:98px;font-size:6.9px;line-height:10px;color:#111;letter-spacing:0.047px;">İşlemler</span>
<span id="t40" class="t ft" style="left:15.80px;top:110px;font-size:6.9px;line-height:10px;color:#111;letter-spacing:0.016px;">Durumu</span>
<span id="t41" class="t ft" style="left:62.80px;top:110px;font-size:6.9px;line-height:10px;color:#111;letter-spacing:-0.028px;">İşlem Kodu</span>
<span id="t42" class="t ft" style="left:108.40px;top:110px;font-size:6.9px;line-height:10px;color:#111;letter-spacing:0.173px;">İşlem Tanımı</span>
<span id="t43" class="t ft" style="left:265.40px;top:110px;font-size:6.9px;line-height:10px;color:#111;letter-spacing:-0.089px;">Kaç Saat Sürdü</span>
<span id="t44" class="t ft" style="left:321.40px;top:110px;font-size:6.9px;line-height:10px;color:#111;letter-spacing:-0.002px;">Saat Ücreti</span>
<span id="t45" class="t ft" style="left:366.30px;top:110px;font-size:6.9px;line-height:10px;color:#111;letter-spacing:0.036px;">İşlem Ücreti</span>
<span id="t46" class="t ft" style="left:422.80px;top:110px;font-size:6.9px;line-height:10px;color:#111;letter-spacing:0.090px;">Açıklama</span>
<span id="t47" class="t ft" style="left:539.40px;top:110px;font-size:6.9px;line-height:10px;color:#111;letter-spacing:-0.128px;">Bşl.Tarihi Saati</span>
<span id="t48" class="t ft" style="left:614.20px;top:110px;font-size:6.9px;line-height:10px;color:#111;letter-spacing:-0.024px;">Btş.Tarihi Saati</span>
<span id="t49" class="t ft" style="left:15.50px;top:121px;font-size:6.9px;line-height:10px;color:#111;letter-spacing:0.014px;">Yapılacak</span>
<span id="t50" class="t ft" style="left:63.00px;top:121px;font-size:6.9px;line-height:10px;color:#111;letter-spacing:-0.477px;">001</span>
<span id="t51" class="t ft" style="left:108.50px;top:121px;font-size:6.9px;line-height:10px;color:#222;font-weight:400;letter-spacing:-0.041px;">BAKIM ONARIM</span>
<span id="t52" class="t ft" style="left:298.60px;top:121px;font-size:6.9px;line-height:10px;color:#111;letter-spacing:-0.084px;">00:00</span>
<span id="t53" class="t ft" style="left:395.60px;top:121px;font-size:6.9px;line-height:10px;color:#111;letter-spacing:-0.108px;">250,00</span>
<span id="t54" class="t ft" style="left:15.50px;top:132px;font-size:6.9px;line-height:10px;color:#111;letter-spacing:0.014px;">Yapılacak</span>
<span id="t55" class="t ft" style="left:63.00px;top:132px;font-size:6.9px;line-height:10px;color:#111;letter-spacing:-0.477px;">002</span>
<span id="t56" class="t ft" style="left:108.50px;top:132px;font-size:6.9px;line-height:10px;color:#222;font-weight:400;letter-spacing:0.040px;">DIŞ PARÇA DEĞİŞİMİ</span>
<span id="t57" class="t ft" style="left:298.60px;top:132px;font-size:6.9px;line-height:10px;color:#111;letter-spacing:-0.084px;">00:00</span>
<span id="t58" class="t ft" style="left:395.60px;top:132px;font-size:6.9px;line-height:10px;color:#111;letter-spacing:-0.108px;">175,00</span>
<span id="t59" class="t ft" style="left:615.00px;top:132px;font-size:6.9px;line-height:10px;color:#111;letter-spacing:-0.102px;">26.06.2024</span>
<span id="t60" class="t ft" style="left:15.50px;top:144px;font-size:6.9px;line-height:10px;color:#111;letter-spacing:0.371px;">İptal</span>
<span id="t61" class="t ft" style="left:63.00px;top:144px;font-size:6.9px;line-height:10px;color:#111;letter-spacing:-0.477px;">003</span>
<span id="t62" class="t ft" style="left:108.50px;top:144px;font-size:6.9px;line-height:10px;color:#222;font-weight:400;letter-spacing:0.129px;">İÇ PARÇA DEĞİŞİMİ</span>
<span id="t63" class="t ft" style="left:298.60px;top:144px;font-size:6.9px;line-height:10px;color:#111;letter-spacing:-0.084px;">00:00</span>
<span id="t64" class="t ft" style="left:395.60px;top:144px;font-size:6.9px;line-height:10px;color:#111;letter-spacing:-0.108px;">150,00</span>
<span id="t65" class="t ft" style="left:15.50px;top:155px;font-size:6.9px;line-height:10px;color:#111;letter-spacing:0.284px;">Yapıldı</span>
<span id="t66" class="t ft" style="left:63.00px;top:155px;font-size:6.9px;line-height:10px;color:#111;letter-spacing:-0.477px;">004</span>
<span id="t67" class="t ft" style="left:108.50px;top:155px;font-size:6.9px;line-height:10px;color:#222;font-weight:400;letter-spacing:0.037px;">KAPAK DEĞİŞİMİ</span>
<span id="t68" class="t ft" style="left:298.60px;top:155px;font-size:6.9px;line-height:10px;color:#111;letter-spacing:-0.084px;">00:00</span>
<span id="t69" class="t ft" style="left:395.60px;top:155px;font-size:6.9px;line-height:10px;color:#111;letter-spacing:-0.108px;">185,00</span>
<span id="t70" class="t ft" style="left:615.00px;top:155px;font-size:6.9px;line-height:10px;color:#111;letter-spacing:-0.102px;">26.06.2024</span>
<span id="t71" class="t ft" style="left:15.50px;top:166px;font-size:6.9px;line-height:10px;color:#111;letter-spacing:0.284px;">Yapıldı</span>
<span id="t72" class="t ft" style="left:63.00px;top:166px;font-size:6.9px;line-height:10px;color:#111;letter-spacing:-0.477px;">005</span>
<span id="t73" class="t ft" style="left:108.50px;top:166px;font-size:6.9px;line-height:10px;color:#222;font-weight:400;letter-spacing:-0.062px;">MEKANİK AKSAM KONTROLLERİ</span>
<span id="t74" class="t ft" style="left:298.60px;top:166px;font-size:6.9px;line-height:10px;color:#111;letter-spacing:-0.084px;">00:00</span>
<span id="t75" class="t ft" style="left:395.60px;top:166px;font-size:6.9px;line-height:10px;color:#111;letter-spacing:-0.108px;">120,00</span>
<span id="t76" class="t ft" style="left:615.00px;top:166px;font-size:6.9px;line-height:10px;color:#111;letter-spacing:-0.102px;">26.06.2024</span>
<span id="t77" class="t ft" style="left:888.00px;top:186px;font-size:6.9px;line-height:10px;color:#111;letter-spacing:0.167px;">Ücret Toplamı</span>
<span id="t78" class="t ft" style="left:906.40px;top:194px;font-size:6.9px;line-height:10px;color:#111;letter-spacing:-0.177px;">810</span>
<span id="t79" class="t ft" style="left:980.60px;top:99px;font-size:6.9px;line-height:10px;color:#111;letter-spacing:-0.049px;">Personeller</span>
<span id="t80" class="t ft" style="left:980.60px;top:113px;font-size:6.9px;line-height:10px;color:#111;letter-spacing:-0.107px;">Servis Aracı</span>
<span id="t81" class="t ft" style="left:1029.60px;top:113px;font-size:6.9px;line-height:10px;color:#111;letter-spacing:-0.155px;">06ABC06</span>
<span id="t82" class="t ft" style="left:1145.00px;top:113px;font-size:6.9px;line-height:10px;color:#111;letter-spacing:-0.181px;">Aktar</span>
<span id="t83" class="t ft" style="left:1181.43px;top:114px;font-size:6.4px;line-height:9px;color:#fff;">?</span>
<span id="t84" class="t ft" style="left:986.40px;top:128px;font-size:6.9px;line-height:10px;color:#111;letter-spacing:-0.048px;">Adı Soyadı</span>
<span id="t85" class="t ft" style="left:986.00px;top:140px;font-size:6.9px;line-height:10px;color:#111;letter-spacing:-0.004px;">İREM KAVAKLIOĞLU</span>
<span id="t86" class="t ft" style="left:986.00px;top:151px;font-size:6.9px;line-height:10px;color:#111;letter-spacing:-0.280px;">DORUK BABACAN</span>
<span id="t87" class="t ft" style="left:986.00px;top:162px;font-size:6.9px;line-height:10px;color:#111;letter-spacing:-0.145px;">SERHAN BAŞOĞLU</span>
<span id="t88" class="t ft" style="left:1000.00px;top:190px;font-size:6.9px;line-height:10px;color:#111;letter-spacing:-0.229px;">Ekle</span>
<span id="t89" class="t ft" style="left:7.50px;top:213px;font-size:6.9px;line-height:10px;color:#111;letter-spacing:0.095px;">Hareketler</span>
<span id="t90" class="t ft" style="left:47.40px;top:224px;font-size:6.9px;line-height:10px;color:#1b1a8e;letter-spacing:-0.003px;">Barkodu</span>
<span id="t91" class="t ft" style="left:109.40px;top:224px;font-size:6.9px;line-height:10px;color:#1b1a8e;letter-spacing:-0.033px;">Stok Kodu</span>
<span id="t92" class="t ft" style="left:173.60px;top:224px;font-size:6.9px;line-height:10px;color:#1b1a8e;letter-spacing:0.239px;">Stok Adı</span>
<span id="t93" class="t ft" style="left:355.20px;top:224px;font-size:6.9px;line-height:10px;color:#1b1a8e;letter-spacing:0.042px;">Miktarı</span>
<span id="t94" class="t ft" style="left:402.20px;top:224px;font-size:6.9px;line-height:10px;color:#1b1a8e;letter-spacing:-0.125px;">Birimi</span>
<span id="t95" class="t ft" style="left:449.60px;top:224px;font-size:6.9px;line-height:10px;color:#1b1a8e;letter-spacing:0.117px;">Temel Mik.</span>
<span id="t96" class="t ft" style="left:496.80px;top:224px;font-size:6.9px;line-height:10px;color:#1b1a8e;letter-spacing:0.137px;">Temel Brm.</span>
<span id="t97" class="t ft" style="left:543.60px;top:224px;font-size:6.9px;line-height:10px;color:#1b1a8e;letter-spacing:0.066px;">Fiyatı</span>
<span id="t98" class="t ft" style="left:606.80px;top:224px;font-size:6.9px;line-height:10px;color:#1b1a8e;letter-spacing:-0.092px;">Birim 2 Fiyatı</span>
<span id="t99" class="t ft" style="left:664.20px;top:224px;font-size:6.9px;line-height:10px;color:#1b1a8e;letter-spacing:-0.203px;">KDV Durumu</span>
<span id="t100" class="t ft" style="left:710.80px;top:224px;font-size:6.9px;line-height:10px;color:#1b1a8e;letter-spacing:-0.120px;">KDV Hrc.Fiyat</span>
<span id="t101" class="t ft" style="left:773.60px;top:224px;font-size:6.9px;line-height:10px;color:#1b1a8e;letter-spacing:0.064px;">Ara Tutarı</span>
<span id="t102" class="t ft" style="left:836.80px;top:224px;font-size:6.9px;line-height:10px;color:#8f9a12;letter-spacing:0.070px;">Hesap</span>
<span id="t103" class="t ft" style="left:869.60px;top:224px;font-size:6.9px;line-height:10px;color:#8f9a12;letter-spacing:-0.076px;">Simge</span>
<span id="t104" class="t ft" style="left:893.80px;top:224px;font-size:6.9px;line-height:10px;color:#8f9a12;letter-spacing:-0.009px;">Döviz Alış</span>
<span id="t105" class="t ft" style="left:938.60px;top:224px;font-size:6.9px;line-height:10px;color:#8f9a12;letter-spacing:-0.047px;">Döviz Satış</span>
<span id="t106" class="t ft" style="left:985.20px;top:224px;font-size:6.9px;line-height:10px;color:#8f9a12;letter-spacing:0.066px;">Fiyatı</span>
<span id="t107" class="t ft" style="left:1036.20px;top:224px;font-size:6.9px;line-height:10px;color:#8f9a12;letter-spacing:-0.107px;">Birim 2 Fiyatı</span>
<span id="t108" class="t ft" style="left:1092.80px;top:224px;font-size:6.9px;line-height:10px;color:#8f9a12;letter-spacing:-0.170px;">KDV Hrc.Fiyat</span>
<span id="t109" class="t ft" style="left:1143.40px;top:224px;font-size:6.9px;line-height:10px;color:#8f9a12;letter-spacing:-0.009px;">Ara T</span>
<span id="t110" class="t ft" style="left:173.50px;top:236px;font-size:6.9px;line-height:10px;color:#fff;letter-spacing:-0.061px;">KF5000 MOTOR</span>
<span id="t111" class="t ft" style="left:47.00px;top:236px;font-size:6.9px;line-height:10px;color:#000;letter-spacing:-0.078px;">000001</span>
<span id="t112" class="t ft" style="left:110.00px;top:236px;font-size:6.9px;line-height:10px;color:#000;letter-spacing:-0.111px;">STK000001</span>
<span id="t113" class="t ft" style="left:394.07px;top:236px;font-size:6.9px;line-height:10px;color:#000;">1</span>
<span id="t114" class="t ft" style="left:402.70px;top:236px;font-size:6.9px;line-height:10px;color:#000;letter-spacing:-0.607px;">ADET</span>
<span id="t115" class="t ft" style="left:488.97px;top:236px;font-size:6.9px;line-height:10px;color:#000;">1</span>
<span id="t116" class="t ft" style="left:497.00px;top:236px;font-size:6.9px;line-height:10px;color:#000;letter-spacing:-0.607px;">ADET</span>
<span id="t117" class="t ft" style="left:573.30px;top:236px;font-size:6.9px;line-height:10px;color:#000;letter-spacing:0.015px;">1.881,60</span>
<span id="t118" class="t ft" style="left:630.00px;top:236px;font-size:6.9px;line-height:10px;color:#000;letter-spacing:0.015px;">1.881,60</span>
<span id="t119" class="t ft" style="left:664.30px;top:236px;font-size:6.9px;line-height:10px;color:#000;letter-spacing:0.041px;">Hariç</span>
<span id="t120" class="t ft" style="left:740.00px;top:236px;font-size:6.9px;line-height:10px;color:#000;letter-spacing:0.015px;">1.881,60</span>
<span id="t121" class="t ft" style="left:802.60px;top:236px;font-size:6.9px;line-height:10px;color:#000;letter-spacing:0.015px;">1.881,60</span>
<span id="t122" class="t ft" style="left:837.30px;top:236px;font-size:6.9px;line-height:10px;color:#84962a;letter-spacing:-0.339px;">KPB</span>
<span id="t123" class="t ft" style="left:870.00px;top:236px;font-size:6.9px;line-height:10px;color:#84962a;">$</span>
<span id="t124" class="t ft" style="left:906.70px;top:236px;font-size:6.9px;line-height:10px;color:#84962a;letter-spacing:0.008px;">32,9015</span>
<span id="t125" class="t ft" style="left:954.00px;top:236px;font-size:6.9px;line-height:10px;color:#84962a;letter-spacing:0.008px;">32,9608</span>
<span id="t126" class="t ft" style="left:1013.30px;top:236px;font-size:6.9px;line-height:10px;color:#84962a;letter-spacing:-0.052px;">57,09</span>
<span id="t127" class="t ft" style="left:1070.60px;top:236px;font-size:6.9px;line-height:10px;color:#84962a;letter-spacing:-0.052px;">57,09</span>
<span id="t128" class="t ft" style="left:1120.60px;top:236px;font-size:6.9px;line-height:10px;color:#84962a;letter-spacing:-0.052px;">57,09</span>
<span id="t129" class="t ft" style="left:173.50px;top:247px;font-size:6.9px;line-height:10px;color:#000;letter-spacing:-0.175px;">ZX CIFT LED</span>
<span id="t130" class="t ft" style="left:47.00px;top:247px;font-size:6.9px;line-height:10px;color:#000;letter-spacing:-0.078px;">000002</span>
<span id="t131" class="t ft" style="left:110.00px;top:247px;font-size:6.9px;line-height:10px;color:#000;letter-spacing:-0.111px;">STK000002</span>
<span id="t132" class="t ft" style="left:394.07px;top:247px;font-size:6.9px;line-height:10px;color:#000;">5</span>
<span id="t133" class="t ft" style="left:402.70px;top:247px;font-size:6.9px;line-height:10px;color:#000;letter-spacing:-0.607px;">ADET</span>
<span id="t134" class="t ft" style="left:488.97px;top:247px;font-size:6.9px;line-height:10px;color:#000;">5</span>
<span id="t135" class="t ft" style="left:497.00px;top:247px;font-size:6.9px;line-height:10px;color:#000;letter-spacing:-0.607px;">ADET</span>
<span id="t136" class="t ft" style="left:573.30px;top:247px;font-size:6.9px;line-height:10px;color:#000;letter-spacing:0.015px;">2.354,40</span>
<span id="t137" class="t ft" style="left:630.00px;top:247px;font-size:6.9px;line-height:10px;color:#000;letter-spacing:0.015px;">2.354,40</span>
<span id="t138" class="t ft" style="left:664.30px;top:247px;font-size:6.9px;line-height:10px;color:#000;letter-spacing:0.041px;">Hariç</span>
<span id="t139" class="t ft" style="left:740.00px;top:247px;font-size:6.9px;line-height:10px;color:#000;letter-spacing:0.015px;">2.354,40</span>
<span id="t140" class="t ft" style="left:799.00px;top:247px;font-size:6.9px;line-height:10px;color:#000;letter-spacing:-0.076px;">11.772,00</span>
<span id="t141" class="t ft" style="left:837.30px;top:247px;font-size:6.9px;line-height:10px;color:#84962a;letter-spacing:-0.339px;">KPB</span>
<span id="t142" class="t ft" style="left:870.00px;top:247px;font-size:6.9px;line-height:10px;color:#84962a;">$</span>
<span id="t143" class="t ft" style="left:906.70px;top:247px;font-size:6.9px;line-height:10px;color:#84962a;letter-spacing:0.008px;">32,9015</span>
<span id="t144" class="t ft" style="left:954.00px;top:247px;font-size:6.9px;line-height:10px;color:#84962a;letter-spacing:0.008px;">32,9608</span>
<span id="t145" class="t ft" style="left:1013.30px;top:247px;font-size:6.9px;line-height:10px;color:#84962a;letter-spacing:-0.052px;">71,43</span>
<span id="t146" class="t ft" style="left:1070.60px;top:247px;font-size:6.9px;line-height:10px;color:#84962a;letter-spacing:-0.052px;">71,43</span>
<span id="t147" class="t ft" style="left:1120.60px;top:247px;font-size:6.9px;line-height:10px;color:#84962a;letter-spacing:-0.052px;">71,43</span>
<span id="t148" class="t ft" style="left:173.50px;top:258px;font-size:6.9px;line-height:10px;color:#000;letter-spacing:-0.189px;">16X16 DEVRE</span>
<span id="t149" class="t ft" style="left:47.00px;top:258px;font-size:6.9px;line-height:10px;color:#000;letter-spacing:-0.078px;">000003</span>
<span id="t150" class="t ft" style="left:110.00px;top:258px;font-size:6.9px;line-height:10px;color:#000;letter-spacing:-0.111px;">STK000003</span>
<span id="t151" class="t ft" style="left:390.56px;top:258px;font-size:6.9px;line-height:10px;color:#000;letter-spacing:-0.800px;">10</span>
<span id="t152" class="t ft" style="left:402.70px;top:258px;font-size:6.9px;line-height:10px;color:#000;letter-spacing:-0.607px;">ADET</span>
<span id="t153" class="t ft" style="left:485.46px;top:258px;font-size:6.9px;line-height:10px;color:#000;letter-spacing:-0.800px;">10</span>
<span id="t154" class="t ft" style="left:497.00px;top:258px;font-size:6.9px;line-height:10px;color:#000;letter-spacing:-0.607px;">ADET</span>
<span id="t155" class="t ft" style="left:573.30px;top:258px;font-size:6.9px;line-height:10px;color:#000;letter-spacing:0.015px;">2.281,20</span>
<span id="t156" class="t ft" style="left:630.00px;top:258px;font-size:6.9px;line-height:10px;color:#000;letter-spacing:0.015px;">2.281,20</span>
<span id="t157" class="t ft" style="left:664.30px;top:258px;font-size:6.9px;line-height:10px;color:#000;letter-spacing:0.041px;">Hariç</span>
<span id="t158" class="t ft" style="left:740.00px;top:258px;font-size:6.9px;line-height:10px;color:#000;letter-spacing:0.015px;">2.281,20</span>
<span id="t159" class="t ft" style="left:799.00px;top:258px;font-size:6.9px;line-height:10px;color:#000;letter-spacing:-0.076px;">22.812,00</span>
<span id="t160" class="t ft" style="left:837.30px;top:258px;font-size:6.9px;line-height:10px;color:#84962a;letter-spacing:-0.339px;">KPB</span>
<span id="t161" class="t ft" style="left:870.00px;top:258px;font-size:6.9px;line-height:10px;color:#84962a;">$</span>
<span id="t162" class="t ft" style="left:906.70px;top:258px;font-size:6.9px;line-height:10px;color:#84962a;letter-spacing:0.008px;">32,9015</span>
<span id="t163" class="t ft" style="left:954.00px;top:258px;font-size:6.9px;line-height:10px;color:#84962a;letter-spacing:0.008px;">32,9608</span>
<span id="t164" class="t ft" style="left:1013.30px;top:258px;font-size:6.9px;line-height:10px;color:#84962a;letter-spacing:-0.052px;">69,21</span>
<span id="t165" class="t ft" style="left:1070.60px;top:258px;font-size:6.9px;line-height:10px;color:#84962a;letter-spacing:-0.052px;">69,21</span>
<span id="t166" class="t ft" style="left:1120.60px;top:258px;font-size:6.9px;line-height:10px;color:#84962a;letter-spacing:-0.052px;">69,21</span>
<span id="t167" class="t ft" style="left:173.50px;top:270px;font-size:6.9px;line-height:10px;color:#000;letter-spacing:-0.061px;">KF3500 MOTOR</span>
<span id="t168" class="t ft" style="left:47.00px;top:270px;font-size:6.9px;line-height:10px;color:#000;letter-spacing:-0.078px;">000004</span>
<span id="t169" class="t ft" style="left:110.00px;top:270px;font-size:6.9px;line-height:10px;color:#000;letter-spacing:-0.111px;">STK000004</span>
<span id="t170" class="t ft" style="left:394.07px;top:270px;font-size:6.9px;line-height:10px;color:#000;">1</span>
<span id="t171" class="t ft" style="left:402.70px;top:270px;font-size:6.9px;line-height:10px;color:#000;letter-spacing:-0.607px;">ADET</span>
<span id="t172" class="t ft" style="left:488.97px;top:270px;font-size:6.9px;line-height:10px;color:#000;">1</span>
<span id="t173" class="t ft" style="left:497.00px;top:270px;font-size:6.9px;line-height:10px;color:#000;letter-spacing:-0.607px;">ADET</span>
<span id="t174" class="t ft" style="left:573.30px;top:270px;font-size:6.9px;line-height:10px;color:#000;letter-spacing:0.015px;">2.106,00</span>
<span id="t175" class="t ft" style="left:630.00px;top:270px;font-size:6.9px;line-height:10px;color:#000;letter-spacing:0.015px;">2.106,00</span>
<span id="t176" class="t ft" style="left:664.30px;top:270px;font-size:6.9px;line-height:10px;color:#000;letter-spacing:0.041px;">Hariç</span>
<span id="t177" class="t ft" style="left:740.00px;top:270px;font-size:6.9px;line-height:10px;color:#000;letter-spacing:0.015px;">2.106,00</span>
<span id="t178" class="t ft" style="left:802.60px;top:270px;font-size:6.9px;line-height:10px;color:#000;letter-spacing:0.015px;">2.106,00</span>
<span id="t179" class="t ft" style="left:837.30px;top:270px;font-size:6.9px;line-height:10px;color:#84962a;letter-spacing:-0.339px;">KPB</span>
<span id="t180" class="t ft" style="left:870.00px;top:270px;font-size:6.9px;line-height:10px;color:#84962a;">$</span>
<span id="t181" class="t ft" style="left:906.70px;top:270px;font-size:6.9px;line-height:10px;color:#84962a;letter-spacing:0.008px;">32,9015</span>
<span id="t182" class="t ft" style="left:954.00px;top:270px;font-size:6.9px;line-height:10px;color:#84962a;letter-spacing:0.008px;">32,9608</span>
<span id="t183" class="t ft" style="left:1013.30px;top:270px;font-size:6.9px;line-height:10px;color:#84962a;letter-spacing:-0.052px;">63,89</span>
<span id="t184" class="t ft" style="left:1070.60px;top:270px;font-size:6.9px;line-height:10px;color:#84962a;letter-spacing:-0.052px;">63,89</span>
<span id="t185" class="t ft" style="left:1120.60px;top:270px;font-size:6.9px;line-height:10px;color:#84962a;letter-spacing:-0.052px;">63,89</span>
<span id="t186" class="t ft" style="left:173.50px;top:281px;font-size:6.9px;line-height:10px;color:#000;letter-spacing:-0.219px;">TURBO SENSORU</span>
<span id="t187" class="t ft" style="left:47.00px;top:281px;font-size:6.9px;line-height:10px;color:#000;letter-spacing:-0.078px;">000005</span>
<span id="t188" class="t ft" style="left:110.00px;top:281px;font-size:6.9px;line-height:10px;color:#000;letter-spacing:-0.111px;">STK000005</span>
<span id="t189" class="t ft" style="left:394.07px;top:281px;font-size:6.9px;line-height:10px;color:#000;">2</span>
<span id="t190" class="t ft" style="left:402.70px;top:281px;font-size:6.9px;line-height:10px;color:#000;letter-spacing:-0.607px;">ADET</span>
<span id="t191" class="t ft" style="left:488.97px;top:281px;font-size:6.9px;line-height:10px;color:#000;">2</span>
<span id="t192" class="t ft" style="left:497.00px;top:281px;font-size:6.9px;line-height:10px;color:#000;letter-spacing:-0.607px;">ADET</span>
<span id="t193" class="t ft" style="left:573.30px;top:281px;font-size:6.9px;line-height:10px;color:#000;letter-spacing:0.015px;">1.869,60</span>
<span id="t194" class="t ft" style="left:630.00px;top:281px;font-size:6.9px;line-height:10px;color:#000;letter-spacing:0.015px;">1.869,60</span>
<span id="t195" class="t ft" style="left:664.30px;top:281px;font-size:6.9px;line-height:10px;color:#000;letter-spacing:0.041px;">Hariç</span>
<span id="t196" class="t ft" style="left:740.00px;top:281px;font-size:6.9px;line-height:10px;color:#000;letter-spacing:0.015px;">1.869,60</span>
<span id="t197" class="t ft" style="left:802.60px;top:281px;font-size:6.9px;line-height:10px;color:#000;letter-spacing:0.015px;">3.739,20</span>
<span id="t198" class="t ft" style="left:837.30px;top:281px;font-size:6.9px;line-height:10px;color:#84962a;letter-spacing:-0.339px;">KPB</span>
<span id="t199" class="t ft" style="left:870.00px;top:281px;font-size:6.9px;line-height:10px;color:#84962a;">$</span>
<span id="t200" class="t ft" style="left:906.70px;top:281px;font-size:6.9px;line-height:10px;color:#84962a;letter-spacing:0.008px;">32,9015</span>
<span id="t201" class="t ft" style="left:954.00px;top:281px;font-size:6.9px;line-height:10px;color:#84962a;letter-spacing:0.008px;">32,9608</span>
<span id="t202" class="t ft" style="left:1013.30px;top:281px;font-size:6.9px;line-height:10px;color:#84962a;letter-spacing:-0.052px;">56,72</span>
<span id="t203" class="t ft" style="left:1070.60px;top:281px;font-size:6.9px;line-height:10px;color:#84962a;letter-spacing:-0.052px;">56,72</span>
<span id="t204" class="t ft" style="left:1120.60px;top:281px;font-size:6.9px;line-height:10px;color:#84962a;letter-spacing:-0.052px;">56,72</span>
<span id="t205" class="t fs" style="left:1182.84px;top:225px;font-size:8.2px;line-height:12px;color:#85112f;">A</span>
<span id="t206" class="t ft" style="left:5.00px;top:555px;font-size:6.9px;line-height:10px;color:#111;letter-spacing:0.050px;">A<u>l</u>t Toplamlar</span>
<span id="t207" class="t ft" style="left:57.40px;top:557px;font-size:6.9px;line-height:10px;color:#111;letter-spacing:0.082px;"><u>D</u>öviz Alt Toplam</span>
<span id="t208" class="t ft" style="left:122.00px;top:557px;font-size:6.9px;line-height:10px;color:#111;letter-spacing:-0.061px;"><u>K</u>DV Detayları</span>
<span id="t209" class="t ft" style="left:175.10px;top:557px;font-size:6.9px;line-height:10px;color:#111;letter-spacing:0.155px;"><u>İ</u>skontolar</span>
<span id="t210" class="t ft" style="left:216.70px;top:557px;font-size:6.9px;line-height:10px;color:#111;letter-spacing:0.029px;"><u>S</u>tok Bakiyeleri</span>
<span id="t211" class="t ft" style="left:19.40px;top:569px;font-size:6.9px;line-height:10px;color:#111;letter-spacing:0.124px;">Parça Toplamı</span>
<span id="t212" class="t ft" style="left:17.10px;top:579px;font-size:6.9px;line-height:10px;color:#111;letter-spacing:0.220px;">İşçilik Toplamı</span>
<span id="t213" class="t ft" style="left:43.40px;top:591px;font-size:6.9px;line-height:10px;color:#111;letter-spacing:0.244px;">Toplam</span>
<span id="t214" class="t ft" style="left:28.40px;top:602px;font-size:6.9px;line-height:10px;color:#111;letter-spacing:0.163px;">İsk.Toplamı</span>
<span id="t215" class="t ft" style="left:101.30px;top:568px;font-size:7.7px;line-height:11px;color:#111;letter-spacing:-0.017px;">42.310,80 TL</span>
<span id="t216" class="t ft" style="left:123.60px;top:578px;font-size:7.7px;line-height:11px;color:#111;letter-spacing:-0.102px;">0,00 TL</span>
<span id="t217" class="t ft" style="left:101.30px;top:590px;font-size:7.7px;line-height:11px;color:#111;letter-spacing:-0.017px;">42.310,80 TL</span>
<span id="t218" class="t ft" style="left:123.60px;top:601px;font-size:7.7px;line-height:11px;color:#111;letter-spacing:-0.102px;">0,00 TL</span>
<span id="t219" class="t ft" style="left:202.80px;top:569px;font-size:6.9px;line-height:10px;color:#111;letter-spacing:0.180px;">Ara Toplam</span>
<span id="t220" class="t ft" style="left:205.10px;top:580px;font-size:6.9px;line-height:10px;color:#111;letter-spacing:0.207px;">Yuvarlama</span>
<span id="t221" class="t ft" style="left:186.80px;top:590px;font-size:6.9px;line-height:10px;color:#111;letter-spacing:-0.103px;">Hesaplanan KDV</span>
<span id="t222" class="t ft" style="left:276.00px;top:568px;font-size:7.7px;line-height:11px;color:#111;letter-spacing:0.092px;">42.310,80TL</span>
<span id="t223" class="t ft" style="left:299.00px;top:579px;font-size:7.7px;line-height:11px;color:#111;letter-spacing:-0.041px;">0,00TL</span>
<span id="t224" class="t ft" style="left:281.00px;top:590px;font-size:7.7px;line-height:11px;color:#111;letter-spacing:0.082px;">8.462,16TL</span>
<span id="t225" class="t ft" style="left:357.70px;top:568px;font-size:6.9px;line-height:10px;color:#111;letter-spacing:0.068px;">Genel Toplamlar</span>
<span id="t226" class="t ft" style="left:400.00px;top:575px;font-size:12.4px;line-height:17px;color:#111;letter-spacing:-0.333px;">50.772,96 TL</span>
<span id="t227" class="t ft" style="left:407.30px;top:594px;font-size:12.4px;line-height:17px;color:#111;letter-spacing:-0.221px;">1.540,40$</span>
<span id="t228" class="t ft" style="left:80.60px;top:620px;font-size:8.6px;line-height:12px;color:#111;letter-spacing:-0.348px;">Yeni Fiş</span>
<span id="t229" class="t ft" style="left:31.00px;top:641px;font-size:6.9px;line-height:10px;color:#111;letter-spacing:0.004px;">Fiş Hareket Sayısı</span>
<span id="t230" class="t ft" style="left:121.00px;top:641px;font-size:6.9px;line-height:10px;color:#111;">5</span>
</body></html>
